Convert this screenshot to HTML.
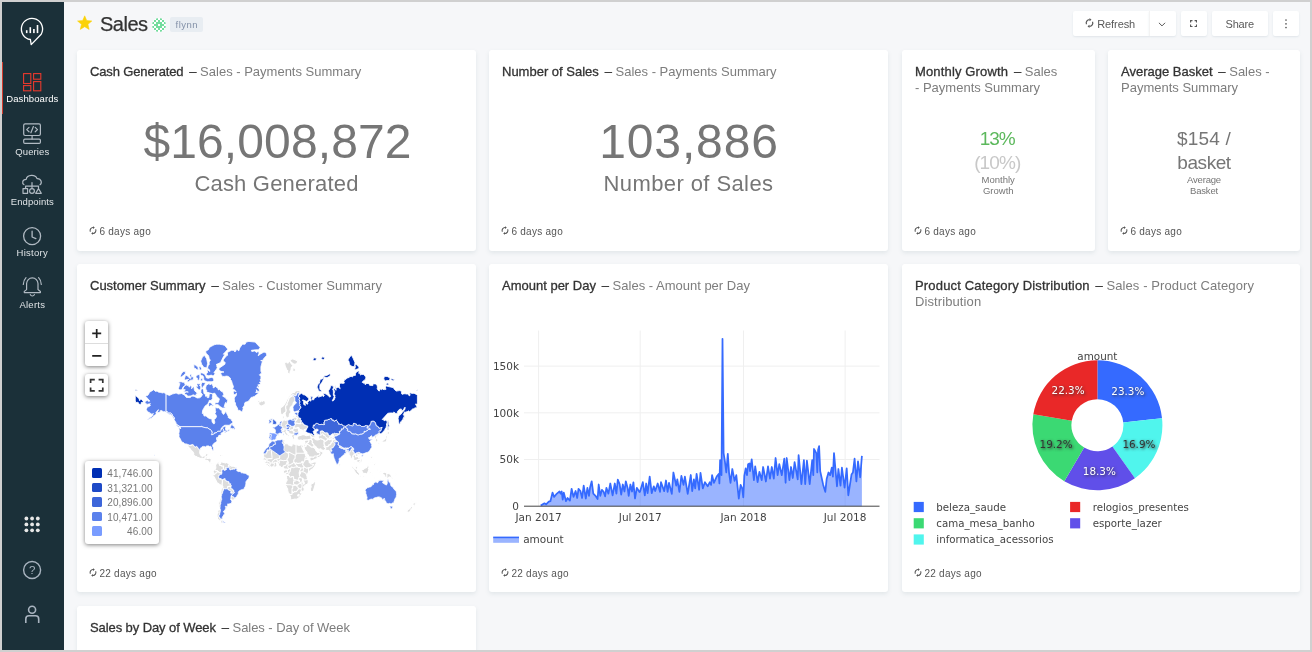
<!DOCTYPE html>
<html lang="en">
<head>
<meta charset="utf-8">
<title>Sales</title>
<style>
*{box-sizing:border-box;margin:0;padding:0}
html,body{width:1312px;height:652px;overflow:hidden}
body{background:#f6f7f9;font-family:"Liberation Sans",sans-serif;color:#333;position:relative}
#app{position:absolute;left:0;top:0;width:1312px;height:652px;overflow:hidden;will-change:transform}
#frame{position:absolute;left:0;top:0;width:1312px;height:652px;border:2px solid #d0d0d0;z-index:50;pointer-events:none}
#side{position:absolute;left:2px;top:2px;width:62px;height:648px;background:#1b3039}
#side .act{position:absolute;left:0;top:60px;width:1px;height:52px;background:#d33a2c}
#side .lbl{position:absolute;left:-.7px;letter-spacing:.1px;width:62px;text-align:center;font-size:9.5px;color:#dfe3e6;line-height:12px;white-space:nowrap}
#side svg{position:absolute;overflow:visible}
.card{position:absolute;background:#fff;border-radius:3px;box-shadow:0 2px 4px rgba(95,125,130,.13)}
.ttl{position:absolute;left:13px;top:14.3px;font-size:13px;line-height:16px;color:#333;white-space:nowrap}
.ttl b,.ttl i{font-weight:normal;-webkit-text-stroke:.3px #333}
.ttl span{color:#7d7d7d}
.ttl i{font-style:normal;margin-left:2.2px}
.foot{position:absolute;left:22.4px;font-size:10px;line-height:12px;color:#555;white-space:nowrap;letter-spacing:.27px}
.foot svg{position:absolute;left:-10.4px;top:.7px}
.btn{position:absolute;top:11px;height:25px;background:#fff;border-radius:2px;box-shadow:0 1px 2px rgba(102,136,153,.15);font-size:11px;color:#595959;line-height:25px;white-space:nowrap}
.lctl{position:absolute;background:#fff;border-radius:3px;box-shadow:0 1px 4px rgba(0,0,0,.5)}
.lctl i{position:absolute;left:7.4px;width:9.9px;height:9.8px;border-radius:1.5px}
.lctl span{position:absolute;right:6.4px;font-size:10px;line-height:13px;color:#777;white-space:nowrap;letter-spacing:.1px}
.big{position:absolute;left:0;width:100%;text-align:center;color:#767676;white-space:nowrap}
</style>
</head>
<body>
<div id="app">
<div id="side">
  <div class="act"></div>
  <svg width="62" height="648" viewBox="2 2 62 648" style="left:0;top:0" fill="none" stroke-linecap="round" stroke-linejoin="round">
    <!-- logo -->
    <g stroke="#fff" stroke-width="1.3">
      <path d="M30.4 39.5 A10.6 10.6 0 1 1 41.2 34.2 L31.2 44.6 Z"/>
    </g>
    <g fill="#fff" stroke="none">
      <rect x="25.9" y="30.2" width="1.6" height="2.9"/><rect x="29.5" y="27.2" width="1.6" height="5.9"/><rect x="33.1" y="29" width="1.6" height="4.1"/><rect x="36.7" y="25" width="1.6" height="8.1"/>
    </g>
    <!-- dashboards -->
    <g stroke="#e8392d" stroke-width="1.1" stroke-linejoin="miter">
      <rect x="23.6" y="73.6" width="7.2" height="9.9"/><rect x="33.6" y="73.6" width="7.2" height="5.6"/>
      <rect x="23.6" y="85.6" width="7.2" height="5.2"/><rect x="33.6" y="81.6" width="7.2" height="9.2"/>
    </g>
    <!-- queries -->
    <g stroke="#b1bac3" stroke-width="1.2">
      <rect x="23.7" y="123.9" width="16.7" height="11.6" rx="1.4"/>
      <path d="M32.1 135.6 V138.9"/>
      <rect x="23.7" y="139.1" width="16.7" height="4.3" rx="1.2"/>
      <path d="M29 127.4 L26.7 129.6 L29 131.8 M35.2 127.4 L37.5 129.6 L35.2 131.8 M33.4 126.5 L30.9 132.8"/>
    </g>
    <!-- endpoints -->
    <g stroke="#b1bac3" stroke-width="1.2">
      <path d="M23.9 184.6 C22 183.5 22 179.5 26.2 179.3 C27 174.3 35.5 174 37 178.6 C41.5 178.3 42.3 183.4 40 184.8"/>
      <path d="M32 182.6 V188 M25.6 188 V186.2 H38.5 V188"/>
      <rect x="23" y="188.7" width="4.6" height="4.6"/>
      <circle cx="32" cy="191" r="2.4"/>
      <path d="M38.5 188.6 L41.3 193.3 H35.7 Z"/>
    </g>
    <!-- history -->
    <g stroke="#b1bac3" stroke-width="1.3">
      <circle cx="32.1" cy="236.1" r="8.5"/>
      <path d="M32.1 231.2 V237 L35.9 238.6"/>
    </g>
    <!-- alerts -->
    <g stroke="#b1bac3" stroke-width="1.2">
      <path d="M26.6 289.6 V283.6 A5.7 5.7 0 0 1 38 283.6 V289.6 L40.4 291.4 V292.6 H24.3 V291.4 Z"/>
      <path d="M30.3 294.6 A2.2 2.2 0 0 0 34.4 294.6"/>
      <path d="M26 277.6 C24.3 279.3 23.4 281.6 23.3 284.4 M38.6 277.6 C40.3 279.3 41.2 281.6 41.3 284.4"/>
    </g>
    <!-- apps -->
    <g fill="#e8e8e8" stroke="none">
      <circle cx="26.4" cy="518.5" r="1.9"/><circle cx="32.1" cy="518.5" r="1.9"/><circle cx="37.8" cy="518.5" r="1.9"/>
      <circle cx="26.4" cy="524.4" r="1.9"/><circle cx="32.1" cy="524.4" r="1.9"/><circle cx="37.8" cy="524.4" r="1.9"/>
      <circle cx="26.4" cy="530.3" r="1.9"/><circle cx="32.1" cy="530.3" r="1.9"/><circle cx="37.8" cy="530.3" r="1.9"/>
    </g>
    <!-- help -->
    <g stroke="#a9b4c0" stroke-width="1.4">
      <circle cx="32.1" cy="570" r="8.5"/>
    </g>
    <text x="32.1" y="574.2" text-anchor="middle" font-family="Liberation Sans, sans-serif" font-size="11.5" fill="#a9b4c0" stroke="none">?</text>
    <!-- user -->
    <g stroke="#a9b4c0" stroke-width="1.6" stroke-linecap="butt">
      <circle cx="32.1" cy="609.7" r="3.5"/>
      <path d="M25.8 623 V619 A3.2 3.2 0 0 1 29 615.8 H35.5 A3.2 3.2 0 0 1 38.7 619 V623"/>
    </g>
  </svg>

  <div class="lbl" style="top:91px;color:#fff">Dashboards</div>
  <div class="lbl" style="top:144px">Queries</div>
  <div class="lbl" style="top:194px">Endpoints</div>
  <div class="lbl" style="top:245px;letter-spacing:.27px">History</div>
  <div class="lbl" style="top:297px;letter-spacing:.25px">Alerts</div>
</div>

<!-- header -->
<div id="hdr">
  <svg style="position:absolute;left:76.9px;top:14.9px" width="15.4" height="15.4" viewBox="0 0 17 17"><path d="M8.5 0.9 L10.75 6.1 L16.4 6.6 L12.1 10.35 L13.4 15.9 L8.5 12.95 L3.6 15.9 L4.9 10.35 L0.6 6.6 L6.25 6.1 Z" fill="#fbd208" stroke="#fbd208" stroke-width=".6" stroke-linejoin="round"/></svg>
  <div style="position:absolute;left:100px;top:11.5px;font-size:20px;line-height:24px;color:#333;letter-spacing:-.5px;-webkit-text-stroke:.25px #333">Sales</div>
  <svg style="position:absolute;left:152px;top:17.5px" width="14" height="14" viewBox="0 0 14 14">
    <defs><clipPath id="avc"><circle cx="7" cy="7" r="7"/></clipPath></defs>
    <g clip-path="url(#avc)"><rect width="14" height="14" fill="#fff"/>
    <g fill="#5bd68c" fill-opacity=".85"><rect x="4" y="0" width="2" height="2"/><rect x="8" y="0" width="2" height="2"/><rect x="2" y="2" width="2" height="2"/><rect x="6" y="2" width="2" height="2"/><rect x="10" y="2" width="2" height="2"/><rect x="0" y="4" width="2" height="2"/><rect x="4" y="4" width="2" height="2"/><rect x="6" y="4" width="2" height="2"/><rect x="8" y="4" width="2" height="2"/><rect x="12" y="4" width="2" height="2"/><rect x="2" y="6" width="2" height="2"/><rect x="4" y="6" width="2" height="2"/><rect x="8" y="6" width="2" height="2"/><rect x="10" y="6" width="2" height="2"/><rect x="0" y="8" width="2" height="2"/><rect x="4" y="8" width="2" height="2"/><rect x="6" y="8" width="2" height="2"/><rect x="8" y="8" width="2" height="2"/><rect x="12" y="8" width="2" height="2"/><rect x="2" y="10" width="2" height="2"/><rect x="6" y="10" width="2" height="2"/><rect x="10" y="10" width="2" height="2"/><rect x="4" y="12" width="2" height="2"/><rect x="8" y="12" width="2" height="2"/></g></g>
  </svg>
  <div style="position:absolute;left:170px;top:16.5px;width:33px;height:15px;background:#e8edf2;border-radius:2px;font-size:9.5px;line-height:15px;text-align:center;color:#8391a8;letter-spacing:.45px;text-indent:.45px">flynn</div>

  <div class="btn" style="left:1073px;width:76px;border-radius:2px 0 0 2px">
    <svg style="position:absolute;left:11.5px;top:7.2px" width="9" height="10" viewBox="0 0 9 10"><path d="M1.49 6.34 A3.3 3.3 0 0 1 4.60 1.70 M7.51 3.66 A3.3 3.3 0 0 1 4.40 8.30" fill="none" stroke="#595959" stroke-width="1.2"/><path d="M4.50 0.10 L6.50 1.70 L4.50 3.30 Z M4.50 6.70 L2.50 8.30 L4.50 9.90 Z" fill="#595959" stroke="none"/></svg>
    <span style="position:absolute;left:24.2px;top:.7px;letter-spacing:-.08px">Refresh</span></div>
  <div class="btn" style="left:1149px;width:27px;border-left:1px solid #f3f3f3;border-radius:0 2px 2px 0">
    <svg style="position:absolute;left:8.4px;top:10.8px" width="8" height="5" viewBox="0 0 8 5" fill="none" stroke="#595959" stroke-width="1"><path d="M0.9 0.8 L4 3.9 L7.1 0.8"/></svg></div>
  <div class="btn" style="left:1181px;width:26px">
    <svg style="position:absolute;left:9.2px;top:8.9px" width="7.1" height="7.1" viewBox="0 0 7.1 7.1" fill="none" stroke="#595959" stroke-width="1.15"><path d="M0.58 2.5 V0.58 H2.5 M4.6 0.58 H6.52 V2.5 M6.52 4.6 V6.52 H4.6 M2.5 6.52 H0.58 V4.6"/></svg></div>
  <div class="btn" style="left:1212px;width:55.5px;text-align:center;letter-spacing:-.2px;padding-top:.7px">Share</div>
  <div class="btn" style="left:1273px;width:26px">
    <svg style="position:absolute;left:12.2px;top:8px" width="2" height="10" viewBox="0 0 2 10" fill="#595959"><circle cx="1" cy="1" r=".85"/><circle cx="1" cy="4.8" r=".85"/><circle cx="1" cy="8.5" r=".85"/></svg></div>
</div>

<!-- row 1 -->
<div class="card" style="left:77px;top:50px;width:399px;height:201px">
  <div class="ttl"><b style="letter-spacing:-.14px">Cash Generated</b> <i>&ndash;</i> <span>Sales - Payments Summary</span></div>
  <div class="big" style="top:64.5px;font-size:48px;line-height:54px;letter-spacing:.1px;padding-left:2px">$16,008,872</div>
  <div class="big" style="top:120.9px;font-size:22px;line-height:26px;letter-spacing:.2px">Cash Generated</div>
  <div class="foot" style="top:175.7px">6 days ago<svg width="8" height="9" viewBox="0 0 8 9"><path d="M1.35 5.68 A2.9 2.9 0 0 1 4.10 1.60 M6.65 3.32 A2.9 2.9 0 0 1 3.90 7.40" fill="none" stroke="#555" stroke-width="1.05"/><path d="M4.00 0.20 L5.80 1.60 L4.00 3.00 Z M4.00 6.00 L2.20 7.40 L4.00 8.80 Z" fill="#555" stroke="none"/></svg></div>
</div>
<div class="card" style="left:489px;top:50px;width:399px;height:201px">
  <div class="ttl"><b>Number of Sales</b> <i>&ndash;</i> <span>Sales - Payments Summary</span></div>
  <div class="big" style="top:64.5px;font-size:48px;line-height:54px;letter-spacing:.88px;padding-left:1px">103,886</div>
  <div class="big" style="top:120.9px;font-size:22px;line-height:26px;letter-spacing:.4px">Number of Sales</div>
  <div class="foot" style="top:175.7px">6 days ago<svg width="8" height="9" viewBox="0 0 8 9"><path d="M1.35 5.68 A2.9 2.9 0 0 1 4.10 1.60 M6.65 3.32 A2.9 2.9 0 0 1 3.90 7.40" fill="none" stroke="#555" stroke-width="1.05"/><path d="M4.00 0.20 L5.80 1.60 L4.00 3.00 Z M4.00 6.00 L2.20 7.40 L4.00 8.80 Z" fill="#555" stroke="none"/></svg></div>
</div>
<div class="card" style="left:902px;top:50px;width:192.5px;height:201px">
  <div class="ttl"><b style="letter-spacing:.15px">Monthly Growth</b> <i>&ndash;</i> <span>Sales<br>- Payments Summary</span></div>
  <div class="big" style="top:77.1px;font-size:19px;line-height:24px;color:#5cb85c;letter-spacing:-1.1px;padding-right:2.2px">13%</div>
  <div class="big" style="top:101.2px;font-size:19px;line-height:24px;color:#c8c8c8;letter-spacing:-.9px;padding-right:2px">(10%)</div>
  <div class="big" style="top:123.9px;font-size:9.5px;line-height:11.4px;white-space:normal">Monthly<br>Growth</div>
  <div class="foot" style="top:175.7px">6 days ago<svg width="8" height="9" viewBox="0 0 8 9"><path d="M1.35 5.68 A2.9 2.9 0 0 1 4.10 1.60 M6.65 3.32 A2.9 2.9 0 0 1 3.90 7.40" fill="none" stroke="#555" stroke-width="1.05"/><path d="M4.00 0.20 L5.80 1.60 L4.00 3.00 Z M4.00 6.00 L2.20 7.40 L4.00 8.80 Z" fill="#555" stroke="none"/></svg></div>
</div>
<div class="card" style="left:1108px;top:50px;width:192px;height:201px">
  <div class="ttl"><b>Average Basket</b> <i>&ndash;</i> <span>Sales -<br>Payments Summary</span></div>
  <div class="big" style="top:77.1px;font-size:19px;line-height:24px;letter-spacing:.2px">$154 /</div>
  <div class="big" style="top:101.2px;font-size:19px;line-height:24px;letter-spacing:-.45px">basket</div>
  <div class="big" style="top:123.9px;font-size:9.5px;line-height:11.4px;white-space:normal;letter-spacing:-.2px">Average<br>Basket</div>
  <div class="foot" style="top:175.7px">6 days ago<svg width="8" height="9" viewBox="0 0 8 9"><path d="M1.35 5.68 A2.9 2.9 0 0 1 4.10 1.60 M6.65 3.32 A2.9 2.9 0 0 1 3.90 7.40" fill="none" stroke="#555" stroke-width="1.05"/><path d="M4.00 0.20 L5.80 1.60 L4.00 3.00 Z M4.00 6.00 L2.20 7.40 L4.00 8.80 Z" fill="#555" stroke="none"/></svg></div>
</div>

<!-- row 2 -->
<div class="card" style="left:77px;top:264px;width:399px;height:328px">
  <svg style="position:absolute;left:0;top:0" width="399" height="328" viewBox="77 264 399 328">
<g stroke="#fff" stroke-width=".8" stroke-linejoin="round">
<path d="M204.1 459.4 204.1 458.8 204.5 458.1 205.5 458.1 205.6 457.9 205.1 457.1 205.1 456.7 206.6 456.7 206.6 456.6 207.0 456.1 207.4 456.5 207.2 457.4 206.7 458.3 207.3 458.4 207.9 458.4 209.0 458.3 209.8 458.3 210.3 458.4 211.0 458.8 211.3 459.0 211.0 460.1 211.0 461.1 210.8 461.7 210.6 462.5 211.0 462.7 211.7 463.3 212.0 463.7 212.6 464.0 213.4 463.7 214.0 463.3 214.9 463.5 215.7 464.1 215.7 464.2 215.9 464.7 215.3 465.2 215.0 464.5 214.8 464.1 214.0 463.9 213.5 464.4 213.3 464.5 213.7 465.0 213.0 465.2 212.4 464.5 211.4 464.5 211.4 464.5 211.0 464.3 210.8 464.1 210.1 463.3 209.7 463.3 209.2 463.1 209.2 462.3 209.2 462.1 208.6 461.6 208.1 461.0 207.7 460.7 207.8 460.4 207.5 460.5 207.0 460.5 206.4 460.2 205.8 460.1 204.9 459.9Z" fill="#dddddd" stroke-width="1.05"/>
<path d="M211.9 452.2 213.2 452.3 214.2 452.9 215.0 452.8 216.4 453.9 217.1 454.1 217.7 454.3 218.2 454.7 217.6 455.0 215.4 455.0 216.0 454.6 215.2 454.3 214.7 453.6 213.5 453.4 212.3 453.1 212.0 452.9 212.3 452.7 211.0 453.1 210.6 453.3 210.2 453.4 209.8 453.3 210.3 453.1 210.4 452.7 211.1 452.4ZM219.0 455.0 220.3 455.0 220.9 455.0 221.6 455.2 221.7 455.5 222.9 456.1 222.6 456.4 221.1 456.4 220.4 456.9 220.2 456.6 219.7 456.4 218.5 456.6 218.0 456.3 219.4 456.2 219.7 456.0 219.3 455.7 219.3 455.3 218.9 455.2ZM215.6 456.1 216.1 456.2 216.7 456.6 215.9 456.8 215.0 456.4ZM224.4 456.1 225.0 456.4 224.7 456.6 223.7 456.6 223.7 456.2Z" fill="#dddddd" stroke-width="1.05"/>
<path d="M184.6 443.9 186.4 443.9 189.4 445.1 191.6 445.1 191.6 444.6 192.9 444.6 194.1 445.7 194.5 446.6 195.6 447.1 196.1 446.4 196.7 446.4 197.3 446.8 198.0 447.9 198.4 448.5 198.8 449.4 200.0 450.0 200.3 449.9 199.8 451.3 199.7 452.9 200.2 454.4 200.8 455.0 200.9 455.5 201.2 455.9 202.1 456.1 202.4 456.5 203.7 456.1 204.8 455.8 205.2 455.5 205.5 454.3 205.6 454.1 207.0 453.6 208.1 453.6 208.4 453.8 207.9 454.7 207.7 455.2 207.6 456.3 207.0 456.1 206.6 456.6 206.6 456.7 205.1 456.7 205.1 457.1 205.6 457.9 205.5 458.1 204.5 458.1 204.1 458.8 204.1 459.4 203.2 458.5 202.2 458.0 200.7 458.4 198.9 457.7 197.4 457.2 196.5 456.6 195.3 456.3 194.1 455.5 193.7 455.0 193.6 454.6 193.9 454.0 193.6 453.3 193.3 452.5 192.6 451.7 191.4 450.5 190.7 450.1 190.7 449.2 189.9 448.7 189.7 448.1 188.8 447.6 188.5 447.1 188.0 446.2 187.8 445.1 186.4 444.6 186.4 445.0 186.5 446.1 187.6 447.3 188.0 448.2 188.4 449.8 189.2 451.1 190.0 451.3 190.7 452.0 190.2 452.5 190.0 452.0 188.9 451.1 188.5 450.9 188.5 450.2 187.5 449.1 186.7 448.8 186.2 448.3 186.9 447.9 186.9 447.5 185.9 446.6 184.9 444.8Z" fill="#dddddd" stroke-width="1.05"/>
<path d="M221.9 479.5 222.9 479.6 223.1 479.3 224.2 478.7 225.1 478.6 225.2 479.5 225.1 480.1 226.0 480.8 226.9 480.9 227.2 481.2 228.0 481.6 228.5 481.6 229.0 481.8 229.1 482.9 229.0 482.9 229.2 483.8 230.8 483.8 230.6 484.3 230.7 484.7 231.3 485.4 231.2 486.1 231.0 486.9 230.8 487.1 230.8 486.8 230.1 486.4 229.4 486.3 228.0 486.6 227.6 487.3 227.6 487.8 227.3 488.7 227.2 488.6 226.2 488.6 225.9 489.3 225.5 488.7 224.4 488.4 223.8 489.2 223.2 489.3 222.9 488.1 222.5 487.2 222.8 486.4 222.3 486.1 222.2 485.5 221.9 484.9 222.3 484.0 222.0 483.4 222.2 483.0 222.1 482.8 222.4 482.4 222.4 481.7 222.4 481.1 222.6 480.9Z" fill="#dddddd" stroke-width="1.05"/>
<path d="M222.6 519.5 222.6 522.5 223.4 522.5 223.9 522.6 223.7 523.1 223.0 523.5 222.6 523.5 222.1 523.4 221.6 523.0 220.8 522.8 219.8 522.0 219.0 521.3 217.9 519.8 218.5 520.1 219.6 521.0 220.7 521.5 221.1 520.9 221.3 520.0 222.0 519.4ZM221.9 484.9 222.2 485.5 222.3 486.1 222.8 486.4 222.5 487.2 222.9 488.1 223.2 489.3 223.8 489.2 223.9 489.4 223.7 490.3 222.8 490.7 222.8 492.2 222.6 492.4 222.9 492.8 222.3 493.3 221.8 494.2 221.5 495.0 221.6 495.8 221.1 496.8 221.5 498.4 221.7 498.6 221.7 499.4 221.2 500.4 221.2 501.2 220.7 501.9 220.7 502.7 220.9 503.7 220.4 504.0 220.2 504.9 220.0 506.0 220.2 507.3 219.9 507.5 220.0 508.7 220.4 509.1 220.1 509.6 220.5 509.8 220.6 510.2 220.2 510.4 220.3 511.1 220.0 512.6 219.7 513.5 219.7 514.1 219.5 514.9 218.9 515.4 218.9 516.8 219.2 517.1 219.7 517.1 219.7 518.0 220.0 518.8 221.9 518.9 222.6 519.1 222.0 519.1 221.6 519.5 220.9 519.9 220.7 521.1 220.4 521.2 219.5 520.7 218.6 519.8 217.7 519.1 217.4 518.3 217.6 517.6 217.2 516.7 217.1 514.7 217.5 513.5 218.3 512.7 217.1 512.3 217.9 511.3 218.1 509.5 219.0 509.9 219.4 507.6 218.9 507.4 218.6 508.7 218.1 508.5 218.4 507.0 218.7 505.1 219.0 504.4 218.8 503.4 218.7 502.3 219.1 502.3 219.5 500.7 220.1 499.2 220.4 497.8 220.2 496.4 220.5 495.6 220.4 494.5 220.8 493.4 221.0 491.8 221.2 490.0 221.5 488.1 221.4 486.7 221.2 485.5Z" fill="#dddddd" stroke-width="1.05"/>
<path d="M215.7 464.1 216.2 464.1 217.1 463.5 217.2 462.5 217.7 462.1 218.2 462.1 218.9 462.1 219.8 461.5 220.2 461.1 220.4 461.1 220.7 461.3 220.5 461.6 220.0 461.7 219.6 462.2 218.9 463.7 219.3 463.7 219.7 464.3 219.7 465.1 220.0 465.4 221.5 465.4 222.0 466.1 223.3 466.0 223.7 466.1 223.3 467.4 223.7 468.2 223.3 468.7 223.6 468.9 224.0 469.9 223.8 470.0 223.7 469.6 223.5 469.3 223.2 469.6 221.7 469.6 221.7 470.0 222.2 470.1 222.1 470.4 221.9 470.4 221.5 470.5 221.5 471.1 221.8 471.3 222.0 471.8 222.0 472.2 221.6 474.3 221.2 473.9 221.0 473.8 221.5 473.0 220.9 472.7 220.4 472.7 219.7 472.8 219.1 472.7 218.6 471.9 218.3 471.7 217.3 471.1 217.5 470.9 217.0 470.8 216.6 470.6 215.7 470.6 215.5 470.3 214.6 469.8 214.5 469.6 214.8 469.5 214.7 469.1 215.0 468.9 215.3 468.8 216.0 467.9 215.7 467.7 215.8 467.2 215.7 466.5 215.8 466.3 215.7 465.6 215.3 465.2 215.9 464.7 215.7 464.2Z" fill="#dddddd" stroke-width="1.05"/>
<path d="M213.5 473.6 213.9 473.0 213.7 472.6 213.4 473.0 212.9 472.6 213.1 472.5 213.0 471.8 213.2 471.6 213.4 471.1 213.7 470.6 213.6 470.3 214.6 469.8 215.5 470.3 215.7 470.6 216.6 470.6 217.0 470.8 217.5 470.9 217.3 471.1 217.5 471.6 217.2 472.2 216.4 472.9 215.4 473.3 214.9 474.0 214.8 474.4 214.3 474.8 214.0 474.4 213.7 474.3 213.4 474.4 213.3 474.1 213.5 473.9Z" fill="#dddddd" stroke-width="1.05"/>
<path d="M228.4 518.6 229.4 517.8 230.0 518.1 230.5 517.6 231.1 518.2 230.9 518.6 229.8 519.0 229.5 518.6 228.8 519.1Z" fill="#dddddd" stroke-width="1.05"/>
<path d="M229.5 464.3 230.1 464.6 230.5 465.2 230.5 465.6 230.9 465.6 231.3 466.0 231.6 466.2 232.5 466.3 233.3 466.2 234.1 466.3 234.9 466.7 235.8 467.3 235.9 467.6 235.5 468.4 235.2 468.9 234.9 469.3 234.4 469.1 234.2 469.0 234.0 469.3 233.7 469.1 233.2 468.9 232.8 469.0 232.5 468.9 232.4 469.2 232.6 469.3 232.5 469.5 232.1 469.4 231.5 469.4 231.2 469.6 230.6 469.7 230.5 469.9 230.2 469.9 229.7 469.5 229.6 469.2 229.4 468.7 229.5 468.1 229.8 467.8 229.5 467.4 229.3 467.3 229.4 467.0 229.2 466.8 228.8 466.8 228.3 466.2 228.5 466.0 228.4 465.6 229.0 465.5 229.1 465.4 228.9 465.1 228.9 464.8Z" fill="#dddddd" stroke-width="1.05"/>
<path d="M227.3 488.7 227.6 487.8 227.6 487.3 228.0 486.6 229.4 486.3 230.1 486.4 230.8 486.8 230.8 487.1 231.0 487.5 231.0 488.7 232.1 488.7 232.8 489.2 233.0 490.3 233.8 490.3 233.8 490.8 233.6 491.7 233.6 491.7 233.4 492.5 232.7 493.2 232.1 493.3 231.3 493.2 230.5 493.0 231.3 491.7 231.1 491.3 230.3 491.0 229.4 490.3 228.7 490.2Z" fill="#dddddd" stroke-width="1.05"/>
<path d="M221.9 484.9 221.2 485.5 220.4 485.1 220.4 484.7 218.9 483.9 217.5 483.0 216.8 482.5 216.5 481.8 216.6 481.6 216.0 480.5 215.2 479.1 214.5 477.5 214.2 477.1 213.9 476.6 213.3 476.0 212.8 475.7 213.0 475.4 212.6 474.6 212.8 474.0 213.5 473.6 213.5 473.9 213.3 474.1 213.4 474.4 213.7 474.3 214.0 474.4 214.3 474.8 214.8 474.4 214.9 474.0 215.4 473.3 216.4 472.9 217.2 472.2 217.5 471.6 217.3 471.1 218.3 471.7 218.6 471.9 219.1 472.7 219.7 472.8 220.4 472.7 220.9 472.7 221.5 473.0 221.0 473.8 221.2 473.9 221.6 474.3 220.9 474.3 220.8 474.4 220.2 474.5 219.3 475.1 219.2 475.4 219.0 475.7 219.1 476.1 218.6 476.3 218.6 476.6 218.4 476.8 218.7 477.5 219.2 478.0 219.0 478.4 219.5 478.4 219.8 478.9 221.1 478.4 221.1 479.6 221.9 479.5 222.6 480.9 222.4 481.1 222.4 481.7 222.4 482.4 222.1 482.8 222.2 483.0 222.0 483.4 222.3 484.0 221.8 484.9Z" fill="#dddddd" stroke-width="1.05"/>
<path d="M231.3 495.7 231.7 495.6 232.5 496.4 232.8 496.4 233.6 496.9 234.2 497.4 234.7 498.0 234.4 498.5 234.5 499.1 234.2 499.6 233.4 500.2 232.7 500.0 232.3 500.1 231.6 499.6 231.1 499.7 230.6 499.2 230.7 498.6 230.9 498.3 230.9 497.4 231.0 496.5Z" fill="#dddddd" stroke-width="1.05"/>
<path d="M220.5 461.6 220.4 461.8 220.0 461.9 220.3 462.3 220.3 462.7 219.9 463.1 220.2 463.7 220.5 463.7 220.8 463.1 220.4 462.9 220.4 462.2 221.4 461.9 221.3 461.6 221.6 461.3 221.8 461.8 222.4 461.9 222.9 462.3 222.9 462.5 223.7 462.6 224.5 462.5 224.9 462.9 225.5 462.9 226.0 462.7 226.0 462.5 227.9 462.5 227.3 462.7 227.5 463.1 228.1 463.1 228.7 463.5 228.8 464.1 229.2 464.1 229.5 464.3 228.9 464.8 228.9 465.1 229.1 465.4 229.0 465.5 228.4 465.6 228.5 466.0 228.3 466.2 228.8 466.8 228.9 467.1 228.6 467.4 227.7 467.6 227.2 467.8 226.9 467.9 226.3 467.8 225.8 467.7 225.6 467.7 225.9 467.9 225.9 468.5 226.0 468.9 226.7 469.0 226.7 469.2 226.2 469.4 226.1 469.7 225.8 469.9 225.1 470.0 225.1 470.3 224.4 470.4 224.0 469.9 223.6 468.9 223.3 468.7 223.7 468.2 223.3 467.4 223.7 466.1 223.3 466.0 222.0 466.1 221.5 465.4 220.0 465.4 219.7 465.1 219.7 464.3 219.3 463.7 218.9 463.7 219.6 462.2 220.0 461.7Z" fill="#dddddd" stroke-width="1.05"/>
<path d="M294.8 420.6 295.6 420.6 296.4 420.0 296.6 419.4 297.2 418.8 297.1 418.3 297.6 418.0 298.5 417.4 299.3 417.8 299.4 418.1 299.8 418.0 300.6 418.3 300.7 418.9 300.5 419.4 301.0 420.2 301.3 420.5 301.2 420.7 301.8 421.0 302.0 421.2 301.7 421.6 301.1 421.5 300.9 421.6 301.1 422.1 301.3 422.9 300.6 423.0 300.4 423.3 300.4 423.9 300.0 423.8 299.3 423.8 299.1 423.5 298.8 423.8 298.5 423.5 297.9 423.5 297.0 423.3 296.2 423.2 295.7 423.2 295.2 423.5 294.8 423.5 294.8 423.0 294.6 422.4 295.0 422.1 295.0 421.6 294.8 421.1Z" fill="#dddddd" stroke-width="1.05"/>
<path d="M286.3 418.3 285.9 419.4 285.0 418.5 284.9 418.0 286.1 417.6ZM284.9 417.0 284.8 417.6 284.5 416.9 283.9 418.4 284.1 419.1 283.7 419.4 283.0 419.1 282.7 418.4 282.7 417.0 282.9 416.6 283.0 416.1 283.7 416.0 284.1 415.7 284.7 415.3 284.6 416.0 284.5 416.4Z" fill="#dddddd" stroke-width="1.05"/>
<path d="M284.1 419.1 284.2 419.6 285.0 420.0 285.0 420.4 285.8 420.2 286.2 419.8 287.0 420.3 287.4 420.7 287.7 421.5 287.4 421.8 287.7 422.3 287.9 422.9 287.8 423.4 288.1 424.2 287.8 424.3 287.6 424.2 287.4 424.4 286.8 424.7 286.5 424.9 285.9 425.2 286.1 425.6 286.2 426.1 286.6 426.4 287.0 426.9 286.7 427.4 286.5 427.6 286.6 428.4 286.3 428.3 285.9 428.3 285.3 428.5 284.6 428.4 284.5 428.7 284.1 428.4 283.9 428.5 283.0 428.2 282.9 428.4 282.3 428.4 282.3 427.6 282.7 426.7 281.6 426.5 281.2 426.1 281.2 425.7 281.1 425.4 281.2 424.5 281.1 423.2 281.6 423.2 281.7 422.8 281.9 421.6 281.8 421.1 281.9 420.8 282.6 420.8 282.7 421.1 283.3 420.4 283.1 419.9 283.0 419.1 283.7 419.4Z" fill="#dddddd" stroke-width="1.05"/>
<path d="M291.6 434.7 292.1 433.9 292.4 434.4 292.5 434.7 293.3 434.4 293.9 434.3 294.3 434.6 294.4 435.3 294.9 435.3 295.6 435.0 296.1 435.4 296.8 435.3 296.8 434.8 297.2 435.0 297.0 435.7 296.8 435.8 296.3 435.7 295.9 435.7 294.9 435.9 295.5 436.5 295.1 436.7 294.6 436.7 294.2 436.1 294.1 436.3 294.2 437.0 294.7 437.5 294.4 437.7 294.8 438.2 295.2 438.5 295.2 439.0 294.5 438.8 294.7 439.3 294.2 439.4 294.6 440.2 294.0 440.2 293.4 439.9 293.1 439.1 292.9 438.4 292.6 437.9 292.2 437.4 292.2 437.1 292.0 437.0 292.0 436.8 291.6 436.3 291.5 435.9 291.7 434.9ZM294.9 440.9 295.3 441.2 296.0 441.2 296.6 441.2 297.0 441.3 296.9 441.6 295.7 441.7 294.8 441.3Z" fill="#dddddd" stroke-width="1.05"/>
<path d="M289.1 429.2 289.3 428.5 289.2 428.3 289.6 428.3 289.7 427.8 289.7 427.2 289.8 427.0 290.1 427.0 290.4 426.7 290.6 426.7 290.6 426.4 291.0 426.1 291.2 426.3 291.5 426.0 291.9 426.5 292.4 426.3 292.8 426.4 293.3 426.1 294.1 426.6 293.9 427.0 293.7 427.4 294.1 427.7 294.2 428.0 293.7 428.3 293.3 429.1 292.8 429.9 292.2 430.1 291.7 430.0 291.1 430.3 290.9 430.4 290.2 430.3 289.3 429.6Z" fill="#dddddd" stroke-width="1.05"/>
<path d="M265.0 400.4 264.9 401.8 265.7 403.1 264.7 404.4 262.4 405.6 261.7 406.0 260.7 405.8 258.5 405.2 259.3 404.4 257.6 403.5 259.0 403.1 259.0 402.5 257.3 402.1 257.8 400.8 259.1 400.6 260.2 402.0 261.4 400.8 262.4 401.4 263.7 400.4Z" fill="#dddddd" stroke-width="1.05"/>
<path d="M286.1 429.3 287.2 429.6 287.1 430.2 287.3 430.7 286.6 430.6 286.0 430.9 286.1 431.4 286.0 431.8 286.3 432.3 287.0 432.9 287.3 433.7 288.2 434.6 288.8 434.6 289.1 434.9 288.8 435.1 290.1 435.7 290.8 436.2 290.9 436.4 290.7 436.9 290.2 436.3 289.6 436.2 289.2 436.9 289.9 437.3 289.8 437.8 289.4 437.9 289.0 438.7 288.7 438.8 288.7 438.5 288.8 437.9 289.0 437.7 288.7 437.2 288.4 436.7 288.1 436.4 287.9 436.0 287.4 435.8 287.0 435.4 286.5 435.3 285.9 434.9 285.2 434.2 284.6 433.6 284.4 432.5 284.0 432.4 283.4 432.0 283.0 432.2 282.6 432.7 282.2 432.8 282.3 432.3 281.9 432.1 281.6 431.3 281.9 431.0 281.7 430.6 281.7 430.2 282.1 430.4 282.5 430.4 282.9 430.0 283.0 430.2 283.4 430.2 283.6 429.8 284.1 429.9 284.5 429.6 284.5 429.2 285.0 429.3 285.2 429.2 285.9 429.0ZM288.5 438.5 288.3 439.3 288.4 439.6 288.2 440.0 287.6 439.7 287.2 439.6 286.1 439.1 286.3 438.6 287.1 438.7 288.0 438.6ZM283.6 435.4 284.1 436.1 284.0 437.5 283.6 437.5 283.3 437.8 283.0 437.5 283.0 436.2 282.8 435.6 283.2 435.7Z" fill="#dddddd" stroke-width="1.05"/>
<path d="M292.9 416.6 293.3 415.7 294.0 415.1 294.6 416.3 295.3 416.3 295.4 415.1 296.1 414.9 296.4 415.1 297.1 415.6 297.8 415.6 298.2 416.0 298.2 416.6 298.5 417.4 297.6 418.0 297.1 418.3 296.4 417.6 295.9 417.1 295.1 417.3 293.8 417.3 292.9 417.7Z" fill="#dddddd" stroke-width="1.05"/>
<path d="M294.2 420.0 294.2 419.2 293.9 419.1 293.1 418.8 292.9 417.7 293.8 417.3 295.1 417.3 295.9 417.1 296.4 417.6 297.1 418.3 297.2 418.8 296.6 419.4 296.4 420.0 295.6 420.6 294.8 420.6 294.6 420.2Z" fill="#dddddd" stroke-width="1.05"/>
<path d="M297.2 427.7 297.5 427.4 297.9 427.3 298.6 427.7 298.9 427.8 299.2 428.2 299.1 428.5 299.4 428.7 299.6 429.2 299.8 429.4 299.7 429.6 299.9 429.8 299.7 429.9 299.3 429.8 299.2 429.6 299.0 429.9 298.9 430.3 298.7 430.7 298.5 430.8 298.4 429.3 298.0 428.6 297.7 428.2 297.5 427.8Z" fill="#dddddd" stroke-width="1.05"/>
<path d="M300.7 393.9 299.4 394.8 298.8 395.0 299.1 393.5 298.1 392.5 296.9 393.5 296.5 395.0 295.7 396.1 294.8 395.5 293.9 395.7 293.0 394.4 292.5 395.0 292.0 395.0 292.0 396.5 290.5 396.1 290.2 397.4 289.5 397.4 288.2 401.0 287.0 403.6 287.3 404.4 287.0 405.1 286.3 404.9 285.7 406.7 285.8 408.9 286.3 409.7 286.0 411.6 285.4 412.7 285.0 413.5 284.5 412.6 283.0 414.4 281.9 414.7 280.8 413.9 280.5 412.2 280.3 408.5 281.0 407.5 283.1 406.0 284.6 404.2 286.1 401.6 288.0 397.8 289.2 396.1 291.4 393.5 293.1 392.3 294.4 392.5 295.6 390.6 297.1 390.7 298.5 390.2 300.9 391.8 299.9 392.5ZM288.2 362.9 288.5 361.5 289.7 361.1 290.7 362.9 293.2 366.0 291.3 367.5 290.9 370.5 290.2 371.3 289.8 374.1 288.8 374.1 287.2 372.0 287.9 370.9 286.7 369.8 285.2 366.2 284.5 362.9 286.7 361.5 287.1 362.9ZM290.5 359.7 292.4 358.7 295.2 359.7 297.8 361.1 296.7 363.7 294.4 364.2 292.1 363.3 292.0 362.4 290.9 362.0 290.0 360.2ZM292.6 368.6 294.3 367.8 295.7 370.1 294.0 372.0 292.6 370.9 293.1 370.1Z" fill="#dddddd" stroke-width="1.05"/>
<path d="M294.2 428.0 294.5 427.8 295.0 427.9 295.5 427.9 295.9 428.3 296.1 428.0 296.7 427.9 296.9 427.7 297.2 427.7 297.5 427.8 297.7 428.2 298.0 428.6 298.4 429.3 298.5 430.8 298.9 431.0 299.2 430.8 299.6 431.0 299.6 431.3 299.2 431.6 298.9 431.4 298.8 432.8 298.3 432.7 297.7 432.2 296.8 432.5 296.4 432.8 295.3 432.8 294.6 432.5 294.3 432.7 294.2 432.2 294.0 432.0 294.2 431.8 293.7 431.9 293.3 431.6 293.2 431.1 292.7 430.6 292.2 430.1 292.8 429.9 293.3 429.1 293.7 428.3Z" fill="#dddddd" stroke-width="1.05"/>
<path d="" fill="#dddddd" stroke-width="1.05"/>
<path d="M287.2 429.6 287.8 429.8 288.2 429.4 288.9 429.4 289.1 429.2 289.3 429.6 290.2 430.3 290.9 430.4 291.1 430.3 291.7 430.0 292.2 430.1 292.7 430.6 293.2 431.1 293.3 431.6 293.7 431.9 294.2 431.8 293.9 432.4 293.9 432.9 294.4 433.3 294.1 433.6 293.9 434.3 293.3 434.4 292.5 434.7 292.4 434.4 292.1 433.9 291.6 434.7 291.2 434.3 290.9 434.0 290.1 433.6 289.6 433.3 288.9 433.0 288.3 432.2 288.4 432.1 288.1 431.7 288.1 431.2 287.6 431.1 287.3 431.6 287.1 431.2 287.1 430.8 287.3 430.7 287.1 430.2Z" fill="#dddddd" stroke-width="1.05"/>
<path d="M293.8 402.0 293.0 403.3 293.1 404.4 291.9 405.8 290.3 407.4 289.8 409.7 290.3 410.8 291.1 411.6 290.4 413.4 289.5 413.8 289.2 416.3 288.8 417.6 287.9 417.4 287.4 418.5 286.5 418.5 286.3 417.3 285.6 415.7 285.0 413.5 285.4 412.7 286.0 411.6 286.3 409.7 285.8 408.9 285.7 406.7 286.3 404.9 287.0 405.1 287.3 404.4 287.0 403.6 288.2 401.0 289.5 397.4 290.2 397.4 290.5 396.1 292.0 396.5 292.0 395.0 292.5 395.0 293.6 396.1 294.8 397.6 294.9 400.6 295.1 401.4Z" fill="#dddddd" stroke-width="1.05"/>
<path d="M283.9 428.5 283.9 428.7 283.8 429.0 284.5 429.2 284.5 429.6 284.1 429.9 283.6 429.8 283.4 430.2 283.0 430.2 282.9 430.0 282.5 430.4 282.1 430.4 281.7 430.2 281.5 429.8 281.1 429.9 281.1 429.4 281.7 428.7 281.6 428.5 282.0 428.6 282.3 428.4 282.9 428.4 283.0 428.2Z" fill="#dddddd" stroke-width="1.05"/>
<path d="M301.3 422.9 301.6 422.9 301.8 422.7 302.0 422.8 302.9 422.7 303.3 423.3 303.1 423.5 303.2 423.9 303.8 424.0 304.1 424.5 304.1 424.8 305.1 425.3 305.7 425.0 306.2 425.7 306.6 425.7 307.8 426.0 307.8 426.4 307.5 427.0 307.6 427.7 307.5 428.0 306.4 428.5 306.3 429.0 305.7 429.1 305.2 429.4 304.4 429.5 303.8 429.9 303.8 430.6 304.2 430.9 305.0 430.8 304.8 431.2 304.0 431.4 302.9 432.0 302.5 431.8 302.6 431.3 301.8 431.0 301.9 430.8 302.7 430.3 302.5 430.1 301.2 429.9 301.2 429.4 300.4 429.5 300.2 430.2 299.6 431.0 299.2 430.8 298.9 431.0 298.5 430.8 298.7 430.7 298.9 430.3 299.0 429.9 299.2 429.6 299.3 429.8 299.7 429.9 299.9 429.8 299.7 429.6 299.8 429.4 299.6 429.2 299.4 428.7 299.1 428.5 299.2 428.2 298.9 427.8 298.6 427.7 297.9 427.3 297.5 427.4 297.2 427.7 296.9 427.7 296.7 427.9 296.1 428.0 295.9 428.3 295.5 427.9 295.0 427.9 294.5 427.8 294.2 428.0 294.1 427.7 293.7 427.4 293.9 427.0 294.1 426.6 294.2 426.7 294.0 426.1 294.7 425.2 295.1 425.0 295.2 424.7 294.8 423.5 295.2 423.5 295.7 423.2 296.2 423.2 297.0 423.3 297.9 423.5 298.5 423.5 298.8 423.8 299.1 423.5 299.3 423.8 300.0 423.8 300.4 423.9 300.4 423.3 300.6 423.0Z" fill="#dddddd" stroke-width="1.05"/>
<path d="M271.8 440.8 272.3 440.9 272.8 441.3 273.6 441.2 274.3 441.4 274.7 441.5 276.4 440.8 277.6 440.0 278.7 439.9 280.5 439.9 282.1 439.6 283.0 439.8 283.8 439.4 284.4 439.5 285.1 439.8 284.7 440.7 284.8 441.8 284.3 442.3 284.5 442.7 285.1 443.2 285.4 443.4 286.3 443.7 288.3 444.1 288.7 445.0 290.5 445.5 291.3 446.0 292.1 445.3 291.9 444.6 292.1 444.2 293.2 443.7 294.6 444.2 296.1 444.8 297.1 444.8 299.0 445.4 300.7 444.8 301.5 445.1 302.2 445.3 303.3 445.1 303.7 446.7 303.3 447.8 303.2 448.2 302.9 448.4 302.7 448.0 302.3 447.7 301.8 446.3 301.7 446.4 302.0 447.4 302.5 448.3 303.1 449.7 303.6 450.7 304.4 451.6 304.2 452.3 305.1 453.1 305.3 453.2 305.5 454.1 305.3 454.2 305.4 455.1 305.8 456.1 306.5 456.6 306.9 457.5 307.2 458.3 307.6 458.7 308.7 459.4 309.8 460.6 310.1 460.9 310.3 461.1 310.3 461.5 309.8 461.7 310.1 461.8 310.5 462.0 310.9 462.7 311.3 462.7 312.1 462.5 312.9 462.4 313.6 462.1 314.7 461.9 315.8 461.7 316.1 461.4 316.4 461.4 316.4 462.1 316.3 462.5 316.2 462.8 316.0 463.7 315.6 464.5 315.2 465.6 314.5 466.7 313.8 467.6 312.9 468.6 312.1 469.3 310.9 470.0 310.1 470.7 309.3 471.6 309.0 472.2 308.4 472.5 308.0 472.9 307.8 473.5 307.6 473.8 307.4 474.3 307.1 474.6 306.7 475.5 306.8 476.0 307.2 476.2 307.3 476.5 307.1 477.0 307.2 477.2 307.1 477.6 307.3 478.1 307.6 478.9 308.0 479.0 308.1 479.4 308.0 480.2 308.2 480.9 308.2 482.1 308.3 482.5 308.1 483.1 307.8 483.7 307.3 484.2 306.5 484.5 305.7 484.9 304.8 485.8 304.5 485.9 304.0 486.6 303.6 486.7 303.6 487.3 304.0 488.0 304.1 488.7 304.3 488.7 304.2 489.5 304.1 489.9 304.3 490.0 304.2 490.4 303.8 490.7 303.2 491.0 302.2 491.5 301.9 491.7 302.0 492.1 302.2 492.2 302.1 492.6 301.9 493.3 301.8 494.0 301.6 494.5 301.1 494.9 300.6 495.5 300.4 495.9 300.0 496.6 299.0 497.6 298.5 498.1 297.9 498.5 297.1 498.9 296.6 499.2 295.7 499.3 294.9 499.1 294.1 499.2 293.2 499.5 292.6 499.6 292.1 500.0 291.7 500.0 291.4 499.7 290.8 499.4 290.6 499.2 290.7 498.6 290.4 497.9 290.6 497.8 290.6 497.1 290.2 496.2 289.8 495.5 289.2 494.3 288.6 493.6 288.3 493.0 288.1 492.1 287.9 491.5 287.7 490.2 287.7 489.2 287.6 488.7 287.3 488.3 286.9 487.7 286.4 486.6 285.9 485.8 285.5 484.7 285.5 484.2 285.6 483.4 285.9 482.7 285.9 482.3 286.2 481.6 286.3 481.3 286.8 480.8 287.0 480.4 287.1 479.8 287.1 479.3 286.9 479.1 286.5 478.1 286.5 477.9 286.7 477.7 286.3 476.3 285.9 475.8 285.9 475.5 285.8 474.8 285.1 474.0 284.3 473.2 283.7 472.5 283.3 471.8 283.3 471.5 283.4 471.3 283.7 470.7 283.8 470.1 284.1 470.0 283.9 469.1 284.1 468.5 283.7 468.0 283.4 467.8 283.2 467.4 283.0 467.4 283.0 467.1 282.3 467.4 281.9 467.4 281.6 467.6 281.0 467.5 280.6 467.1 280.3 466.5 279.7 466.0 279.2 466.0 278.5 466.0 277.9 466.1 277.2 466.3 276.0 466.7 275.5 467.0 274.8 467.2 274.1 467.0 273.2 466.8 272.8 466.8 271.8 467.0 270.5 467.5 270.3 467.4 269.3 467.1 268.6 466.5 267.9 466.1 267.4 465.6 267.2 465.5 266.7 465.2 266.3 464.8 266.1 464.5 266.0 463.9 265.6 463.4 265.3 463.1 264.9 462.9 264.9 462.5 264.5 462.2 264.1 461.8 263.8 461.8 263.6 461.5 263.3 461.1 263.2 460.5 263.3 460.1 263.0 459.5 262.6 459.3 262.9 459.1 263.3 458.5 263.5 458.1 263.6 457.2 263.8 456.5 263.6 455.7 263.5 455.2 263.6 454.8 263.5 454.4 263.0 454.1 263.1 453.7 263.6 452.6 263.6 452.4 263.9 451.8 264.3 451.2 264.5 451.1 264.8 450.6 264.8 450.1 265.1 449.5 265.6 449.3 266.1 448.4 266.5 448.0 267.2 447.9 267.8 447.3 268.2 447.1 268.9 446.3 268.7 445.1 269.0 444.4 269.1 443.9 269.6 443.3 270.3 442.8 271.0 442.4 271.5 441.5Z" fill="#dddddd" stroke-width="1.05"/>
<path d="M315.2 480.8 315.4 481.1 315.6 481.7 315.7 482.6 315.9 483.0 315.9 483.4 315.7 483.6 315.5 483.1 315.3 483.4 315.5 484.0 315.4 484.3 315.2 484.5 315.1 485.2 314.8 486.1 314.4 487.3 313.9 488.9 313.6 490.1 313.3 491.1 312.0 491.7 311.5 491.4 310.9 491.1 310.7 490.7 310.6 489.9 310.3 489.3 310.3 488.7 310.4 488.0 310.8 487.9 310.8 487.6 311.2 487.0 311.2 486.4 311.0 486.1 310.9 485.5 310.9 484.7 311.1 484.3 311.2 483.8 311.6 483.8 312.0 483.6 312.3 483.4 312.7 483.4 313.1 483.0 313.8 482.5 314.0 482.1 313.9 481.7 314.2 481.8 314.6 481.3 314.7 480.8Z" fill="#dddddd" stroke-width="1.05"/>
<path d="M340.5 465.0 340.3 465.8 340.0 466.0 339.3 466.2 339.0 465.6 338.8 464.5 339.1 463.2 339.7 463.6 340.1 464.1Z" fill="#dddddd" stroke-width="1.05"/>
<path d="M371.8 451.2 370.9 451.1 370.5 451.9 370.6 452.5 370.9 453.2 371.3 452.5 371.6 451.5 371.9 450.7Z" fill="#dddddd" stroke-width="1.05"/>
<path d="M324.3 440.9 325.1 441.3 325.7 441.2 325.9 440.7 326.5 440.6 326.9 440.3 327.1 439.6 327.8 439.4 327.9 439.0 328.2 439.3 328.5 439.3 329.0 439.3 329.5 439.6 329.7 439.7 330.4 439.4 330.6 439.5 330.8 439.1 331.5 439.0 331.5 438.6 331.9 438.2 332.2 438.4 332.2 438.7 332.4 438.8 332.3 439.6 332.6 439.9 332.9 439.8 333.3 439.7 333.8 439.2 334.3 439.3 335.1 439.3 334.8 439.7 334.4 439.9 333.5 439.9 332.6 440.1 332.2 440.5 332.4 440.9 332.5 441.4 332.1 441.9 332.2 442.3 331.9 442.6 331.1 442.5 331.5 443.1 331.0 443.4 330.7 443.9 330.7 444.5 330.4 444.8 330.1 444.7 329.5 444.8 329.4 445.1 328.8 445.1 328.4 445.6 328.3 446.3 327.3 446.7 326.8 446.6 326.6 446.9 326.2 446.7 325.3 446.9 324.1 446.4 324.8 445.6 324.7 445.0 324.1 444.9 323.8 443.5 324.1 443.0 323.8 442.8 324.0 442.2Z" fill="#dddddd" stroke-width="1.05"/>
<path d="M303.8 446.8 304.7 447.0 305.0 446.7 305.1 446.3 305.8 446.2 305.9 446.0 306.2 445.8 305.4 444.9 306.9 444.4 307.1 444.2 308.0 444.5 309.2 445.1 311.4 447.0 312.9 447.1 313.4 446.2 314.0 446.3 314.1 446.7 314.1 446.9 314.3 447.5 314.6 448.3 315.0 448.5 315.2 448.8 315.7 449.2 315.7 449.5 315.6 449.9 315.7 450.1 315.9 450.4 316.2 450.8 316.1 450.2 316.3 449.8 316.6 449.7 316.8 450.0 316.8 450.5 316.7 451.0 316.8 451.3 317.0 451.5 317.6 451.3 318.7 451.4 319.2 450.8 319.8 450.3 320.3 449.7 320.6 449.4 320.6 449.5 320.6 450.7 320.9 451.3 321.4 451.6 321.9 451.8 322.4 451.9 322.8 452.4 323.2 452.8 323.2 453.0 322.8 453.7 322.5 454.0 322.2 454.6 321.8 454.5 321.7 454.7 321.6 455.2 321.7 455.7 321.6 455.8 321.2 455.8 320.7 456.1 320.6 456.5 320.5 456.6 320.0 456.6 319.7 456.9 319.7 457.2 319.3 457.4 318.8 457.4 318.4 457.6 318.0 457.6 317.4 457.9 317.3 458.3 317.3 458.5 316.5 458.8 315.2 459.3 314.5 459.8 314.1 459.9 313.9 459.8 313.5 460.1 313.0 460.3 312.3 460.4 312.1 460.4 312.0 460.6 311.7 460.7 311.6 460.9 311.2 460.9 311.0 460.9 310.5 460.9 310.2 460.5 310.3 460.0 310.1 459.7 310.0 459.2 309.8 458.8 309.9 458.8 309.8 458.4 309.9 458.3 309.9 458.0 309.8 457.5 309.5 457.3 309.5 457.0 309.1 456.7 308.7 456.0 308.4 455.3 307.9 454.7 307.6 454.7 307.0 453.8 306.9 453.2 307.0 452.7 306.5 451.8 306.2 451.4 305.8 451.3 305.5 450.7 305.5 450.6 305.3 450.1 305.1 450.0 304.7 449.3 304.3 448.6 303.9 447.9 303.5 447.9 303.6 447.5 303.6 447.2Z" fill="#dddddd" stroke-width="1.05"/>
<path d="M349.0 453.2 349.0 453.8 348.7 453.6 348.8 454.3 348.5 453.9 348.5 453.5 348.3 453.1 348.0 452.5 347.3 452.5 347.4 452.9 347.1 453.4 346.7 453.2 346.7 453.3 346.4 453.2 346.1 453.1 346.0 452.5 345.7 451.9 345.9 451.3 345.4 451.1 345.6 450.7 346.0 450.5 345.5 450.0 345.8 449.4 346.4 449.8 346.7 449.8 346.8 450.4 347.6 450.6 348.3 450.6 348.8 450.7 348.4 451.4 348.1 451.4 347.8 451.9 348.2 452.4 348.4 451.9 348.5 451.9Z" fill="#dddddd" stroke-width="1.05"/>
<path d="M307.7 433.1 307.8 432.9 308.4 433.1 309.6 433.3 310.7 433.8 310.8 433.9 311.2 433.8 312.0 434.0 312.3 434.5 312.7 434.7 313.0 434.8 313.5 435.4 313.8 435.4 314.0 435.2 314.5 434.8 314.8 435.3 315.2 436.0 315.6 436.1 315.9 436.3 315.2 436.4 315.1 437.3 314.9 437.7 314.7 437.9 314.7 438.4 314.5 438.4 314.0 437.9 314.3 437.4 314.1 437.1 313.8 437.2 312.8 437.9 312.5 438.0 312.2 437.4 312.2 437.2 311.9 437.2 311.6 437.0 311.5 437.0 311.2 436.7 310.6 436.3 310.7 435.9 310.5 435.5 309.8 435.0 309.0 435.1 309.1 434.6 308.9 433.9 308.0 433.4Z" fill="#dddddd" stroke-width="1.05"/>
<path d="M361.1 453.6 360.0 454.3 359.4 455.1 359.2 455.7 359.7 456.6 360.5 457.6 361.2 458.1 361.7 458.8 362.0 460.3 361.9 461.7 361.3 462.2 360.4 462.7 359.7 463.4 358.8 464.1 358.5 463.7 358.7 463.1 358.1 462.6 357.5 462.5 357.2 462.1 356.8 461.3 356.5 460.3 357.1 459.7 358.1 459.5 358.8 459.6 359.0 459.3 359.1 458.5 358.5 457.9 358.4 457.1 357.8 456.4 357.2 456.3 357.1 456.6 356.6 456.6 356.4 456.5 355.6 457.0 355.5 456.2 355.7 455.3 355.2 455.3 355.1 454.8 354.8 454.6 355.0 454.2 355.7 453.7 355.7 453.9 356.1 453.9 356.1 453.0 356.5 452.8 356.8 452.6 357.5 452.6 358.3 452.5 358.9 452.0 359.3 452.4 360.0 452.5 359.9 453.1 360.2 453.4Z" fill="#dddddd" stroke-width="1.05"/>
<path d="M318.6 439.5 319.3 439.3 319.9 438.7 320.4 438.8 320.7 438.6 321.3 438.7 322.1 439.2 322.8 439.3 323.7 440.1 324.3 440.1 324.3 440.9 324.0 442.2 323.8 442.8 324.1 443.0 323.8 443.5 324.1 444.9 324.7 445.0 324.8 445.6 324.1 446.4 324.5 446.9 324.8 447.4 325.5 447.8 325.6 448.6 325.9 448.7 326.0 449.1 324.9 449.6 324.6 450.6 323.1 450.3 322.2 450.1 321.4 450.1 321.0 448.9 320.6 448.8 320.0 449.0 319.2 449.4 318.3 449.1 317.5 448.4 316.7 448.1 316.3 447.3 315.6 446.2 315.2 446.3 314.7 446.0 314.5 446.3 314.0 445.8 314.0 445.3 313.8 445.3 313.8 444.7 313.4 443.9 312.5 443.5 312.0 442.5 312.1 441.9 312.6 441.5 312.5 440.9 312.0 440.7 311.5 439.5 311.0 438.7 311.2 438.4 310.9 437.3 311.5 437.0 311.6 437.0 311.9 437.2 312.2 437.2 312.2 437.4 312.5 438.0 312.8 437.9 313.8 437.2 314.1 437.1 314.3 437.4 314.0 437.9 314.5 438.4 314.7 438.4 314.9 439.1 315.6 439.3 316.2 439.8 317.4 439.9 318.5 439.7Z" fill="#dddddd" stroke-width="1.05"/>
<path d="M312.0 440.7 312.5 440.9 312.6 441.5 312.1 441.9 312.0 442.5 312.5 443.5 313.4 443.9 313.8 444.7 313.8 445.3 314.0 445.3 314.0 445.8 314.5 446.3 314.0 446.3 313.4 446.2 312.9 447.1 311.4 447.0 309.2 445.1 308.0 444.5 307.1 444.2 306.8 443.1 308.5 442.2 308.8 441.0 308.7 440.2 309.1 440.0 309.5 439.5 309.9 439.3 310.8 439.4 311.1 439.7 311.5 439.5 312.0 440.7Z" fill="#dddddd" stroke-width="1.05"/>
<path d="M386.9 439.6 386.5 440.3 386.7 440.8 386.3 441.5 385.3 441.9 383.9 442.0 382.8 443.0 382.2 442.7 382.2 442.0 380.8 442.2 380.0 442.6 379.0 442.6 379.8 443.4 379.3 444.9 378.8 445.3 378.4 445.0 378.5 444.1 378.1 443.9 377.8 443.2 378.5 442.9 378.9 442.4 379.7 441.9 380.3 441.2 381.8 440.9 382.7 441.1 383.5 439.4 384.0 439.9 385.2 438.9 385.6 438.5 386.1 437.3 386.0 436.0 386.3 435.4 387.2 435.2 387.6 436.7 387.6 437.5 386.8 438.5ZM389.1 432.2 389.7 432.5 390.2 432.0 390.4 433.2 389.3 433.5 388.6 434.6 387.3 433.8 386.9 435.0 386.0 435.0 385.9 433.9 386.3 433.2 387.2 433.1 387.4 431.6 387.6 430.7ZM381.8 442.4 382.0 442.7 381.5 443.3 381.2 443.0 380.8 443.2 380.6 443.8 380.1 443.5 380.1 443.0 380.5 442.4 381.0 442.6 381.3 442.2Z" fill="#dddddd" stroke-width="1.05"/>
<path d="M378.7 434.2 378.9 434.4 378.5 434.3 378.2 434.7 378.0 435.0 378.0 435.7 378.0 435.7 377.6 435.9 377.5 436.1 377.1 436.4 376.6 436.7 376.3 436.9 376.3 437.4 376.2 437.5 376.5 437.6 376.9 438.1 377.6 439.3 377.8 439.9 377.8 441.0 377.5 441.5 376.8 441.7 376.2 442.1 375.5 442.2 375.4 441.7 375.6 440.9 375.2 439.9 375.8 439.8 375.3 439.0 374.9 438.8 374.6 439.0 374.5 438.8 374.1 438.6 374.3 438.2 374.5 438.0 374.4 437.7 374.6 437.3 374.1 437.0 373.8 436.8 374.4 436.0 375.3 435.5 375.8 434.8 376.1 435.1 376.8 435.1 376.7 434.6 377.9 434.2 378.2 433.5Z" fill="#dddddd" stroke-width="1.05"/>
<path d="M332.0 434.3 332.2 433.8 332.6 433.7 334.0 434.0 334.0 433.4 334.5 433.2 335.6 433.6 335.9 433.5 337.3 433.6 338.4 433.6 338.7 434.0 339.3 434.3 339.1 434.5 337.9 435.0 337.6 435.4 336.6 435.5 336.3 436.2 335.5 436.0 335.0 436.2 334.2 436.8 334.3 437.0 334.1 437.3 334.3 438.2 334.6 438.1 335.1 438.3 335.0 438.7 335.1 439.3 334.3 439.3 333.8 439.2 333.3 439.7 332.9 439.8 332.6 439.9 332.3 439.6 332.4 438.8 332.2 438.7 332.2 438.4 331.9 438.2 331.5 438.6 331.5 439.0 330.8 439.1 330.6 439.5 330.4 439.4 329.7 439.7 329.5 439.6 330.0 438.5 329.8 437.8 329.2 437.6 329.4 437.1 330.0 437.2 330.4 436.5 330.7 435.9 331.8 435.7 331.6 436.1 331.7 436.4 332.0 436.4 332.6 436.5 333.7 435.7 332.7 435.2 332.2 435.5 331.5 435.1 332.2 434.4Z" fill="#dddddd" stroke-width="1.05"/>
<path d="M355.6 466.0 355.7 466.4 356.1 466.3 356.4 466.0 356.6 466.1 357.0 466.6 357.4 467.1 357.4 467.6 357.3 468.0 357.4 468.2 357.5 468.7 357.8 468.9 358.0 469.6 358.0 469.9 357.5 470.0 356.8 469.4 355.8 468.7 355.7 468.3 355.3 467.8 355.2 467.1 354.9 466.7 355.0 466.2 354.8 465.8 355.0 465.7Z" fill="#dddddd" stroke-width="1.05"/>
<path d="M354.3 454.7 353.9 455.1 353.4 455.2 353.0 456.1 352.7 456.2 353.1 456.9 353.6 457.5 353.9 458.0 353.6 458.8 353.3 458.9 353.5 459.3 354.0 460.0 354.1 460.4 354.1 460.8 354.4 461.5 353.9 462.3 353.6 463.1 353.6 462.5 353.8 461.9 353.5 461.4 353.6 460.5 353.2 460.1 353.0 459.2 352.8 458.1 352.5 457.5 352.0 457.9 351.1 458.4 350.7 458.4 350.2 458.2 350.4 457.1 350.3 456.4 349.6 455.4 349.8 455.2 349.3 455.0 348.8 454.3 348.7 453.6 349.0 453.8 349.0 453.2 349.4 453.0 349.3 452.6 349.5 452.4 349.5 451.4 350.1 451.6 350.5 450.9 350.5 450.5 351.0 449.8 350.9 449.3 351.9 448.7 352.5 448.8 352.4 448.3 352.7 448.1 352.6 447.8 353.1 447.8 353.3 448.3 353.7 448.5 353.7 449.2 353.7 449.9 352.9 450.6 352.8 451.6 353.7 451.4 353.9 452.3 354.3 452.5 354.1 453.1 354.7 453.5 355.0 453.6 355.7 453.4 355.7 453.7 355.0 454.2 354.8 454.6Z" fill="#dddddd" stroke-width="1.05"/>
<path d="M339.9 446.1 340.2 445.9 340.9 446.2 341.6 446.7 342.1 446.9 342.4 447.3 343.0 447.5 343.6 447.9 344.5 448.1 345.4 448.1 345.3 448.6 345.5 449.1 345.4 449.4 344.7 449.4 343.8 449.3 343.2 449.2 342.7 448.7 341.6 448.6 340.6 448.1 339.9 447.7 339.1 447.3 339.5 446.5ZM346.0 448.7 346.5 448.0 346.9 447.8 347.4 447.9 347.9 448.0 348.2 448.2 348.5 448.5 348.5 449.1 347.8 449.1 347.2 449.0 346.7 449.2 346.0 448.8Z" fill="#dddddd" stroke-width="1.05"/>
<path d="M335.1 439.3 335.3 439.6 335.8 439.9 336.1 440.7 337.3 441.1 336.6 441.9 335.8 442.1 334.5 441.9 334.1 442.3 334.4 443.1 334.8 443.7 335.4 444.1 334.7 444.7 334.7 445.3 334.0 446.3 333.4 447.2 332.6 448.1 331.7 448.0 330.8 449.0 331.4 449.4 331.5 450.1 331.9 450.5 332.0 451.2 330.3 451.2 329.8 451.8 329.2 451.6 329.0 450.9 328.4 450.3 326.9 450.5 325.7 450.5 324.6 450.6 324.9 449.6 326.0 449.1 325.9 448.7 325.6 448.6 325.5 447.8 324.8 447.4 324.5 446.9 324.1 446.4 325.3 446.9 326.2 446.7 326.6 446.9 326.8 446.6 327.3 446.7 328.3 446.3 328.4 445.6 328.8 445.1 329.4 445.1 329.5 444.8 330.1 444.7 330.4 444.8 330.7 444.5 330.7 443.9 331.0 443.4 331.5 443.1 331.1 442.5 331.9 442.6 332.2 442.3 332.1 441.9 332.5 441.4 332.4 440.9 332.2 440.5 332.6 440.1 333.5 439.9 334.4 439.9 334.8 439.7Z" fill="#dddddd" stroke-width="1.05"/>
<path d="M306.8 443.1 305.2 444.1 304.4 443.8 304.4 443.6 304.4 443.2 304.7 442.7 305.1 442.4 304.6 442.0 304.5 441.2 304.7 440.8 305.1 440.3 305.1 439.9 305.4 440.0 306.3 439.8 306.7 439.9 307.3 439.9 308.3 439.6 308.7 439.6 309.5 439.5 309.1 440.0 308.7 440.2 308.8 441.0 308.5 442.2ZM304.4 443.8 305.2 444.1 306.8 443.1 307.1 444.2 306.9 444.4 305.4 444.9 306.2 445.8 305.9 446.0 305.8 446.2 305.1 446.3 305.0 446.7 304.7 447.0 303.8 446.8 303.7 446.7 304.1 445.2 304.2 444.6 304.0 443.9ZM304.4 443.2 304.4 443.6 304.4 443.8 304.0 443.9 304.2 444.6 304.1 445.2 303.7 446.7 303.3 445.1 303.5 444.9 303.7 443.7 303.9 443.4 304.2 443.4 303.9 443.4 304.2 442.6 304.6 442.0 304.6 442.0 305.1 442.4 304.7 442.7Z" fill="#dddddd" stroke-width="1.05"/>
<path d="M356.8 461.3 356.1 460.9 355.4 460.9 355.5 460.3 354.8 460.3 354.7 461.2 354.3 462.4 354.1 463.7 354.7 463.7 355.0 464.4 355.1 465.1 355.5 465.5 356.0 465.6 356.4 466.0 356.1 466.3 355.7 466.4 355.6 466.0 355.0 465.7 354.8 465.8 354.5 465.6 354.3 465.2 353.9 464.7 353.6 464.3 353.4 464.8 353.3 464.3 353.4 463.8 353.6 463.1 353.9 462.3 354.4 461.5 354.1 460.8 354.1 460.4 354.0 460.0 353.5 459.3 353.3 458.9 353.6 458.8 353.9 458.0 353.6 457.5 353.1 456.9 352.7 456.2 353.0 456.1 353.4 455.2 353.9 455.1 354.3 454.7 354.8 454.6 355.1 454.8 355.2 455.3 355.7 455.3 355.5 456.2 355.6 457.0 356.4 456.5 356.6 456.6 357.1 456.6 357.2 456.3 357.8 456.4 358.4 457.1 358.5 457.9 359.1 458.5 359.0 459.3 358.8 459.6 358.1 459.5 357.1 459.7 356.5 460.3 356.8 461.3Z" fill="#dddddd" stroke-width="1.05"/>
<path d="M305.3 435.3 306.4 435.7 307.3 435.5 308.0 435.6 309.0 435.1 309.8 435.0 310.5 435.5 310.7 435.9 310.6 436.3 311.2 436.7 311.5 437.0 310.9 437.3 311.2 438.4 311.0 438.7 311.5 439.5 311.1 439.7 310.8 439.4 309.9 439.3 309.5 439.5 308.7 439.6 308.3 439.6 307.3 439.9 306.7 439.9 306.3 439.8 305.4 440.0 305.1 440.3 305.1 439.9 304.7 440.8 304.4 440.3 304.7 439.9 304.3 440.0 303.6 439.9 303.0 440.4 301.8 440.5 301.2 440.0 300.4 439.9 300.2 440.3 299.6 440.5 298.9 439.9 298.0 439.9 297.5 439.0 297.0 438.5 297.4 437.7 296.9 437.2 297.8 436.2 298.9 436.1 299.3 435.4 300.7 435.5 301.7 434.9 302.6 434.6 304.0 434.6 305.3 435.3ZM296.8 434.8 297.6 434.5 298.3 434.6 298.4 435.0 299.1 435.3 298.9 435.5 298.0 435.6 297.7 435.9 297.1 436.4 296.8 436.0 296.8 435.8 297.0 435.7 297.2 435.0Z" fill="#dddddd" stroke-width="1.05"/>
<path d="M317.5 434.8 317.8 434.5 318.8 434.3 319.3 434.6 319.9 435.3 320.2 435.3 320.2 431.3 322.2 430.7 324.3 432.0 325.0 433.0 325.9 432.8 327.2 432.8 328.2 433.5 328.1 434.6 328.5 434.6 328.6 435.4 329.7 435.5 329.9 435.9 330.1 435.9 330.5 435.2 331.5 434.5 332.0 434.3 332.2 434.4 331.5 435.1 332.2 435.5 332.7 435.2 333.7 435.7 332.6 436.5 332.0 436.4 331.7 436.4 331.6 436.1 331.8 435.7 330.7 435.9 330.4 436.5 330.0 437.2 329.4 437.1 329.2 437.6 329.8 437.8 330.0 438.5 329.5 439.6 329.0 439.3 328.5 439.3 328.2 439.3 327.9 439.0 327.8 439.4 327.1 439.6 326.9 440.3 326.5 440.6 325.9 440.7 325.7 441.2 325.1 441.3 324.3 440.9 324.3 440.1 323.7 440.1 322.8 439.3 322.1 439.2 321.3 438.7 320.7 438.6 320.4 438.8 319.9 438.7 319.3 439.3 318.6 439.5 318.5 438.8 318.6 437.7 318.0 437.4 318.2 436.7 317.7 436.7 317.8 435.7 318.6 436.0 319.2 435.7 318.7 435.0 318.5 434.5 317.8 434.7Z" fill="#dddddd" stroke-width="1.05"/>
<path d="M386.9 478.1 386.1 477.4 385.4 477.3 385.2 477.5 384.2 477.5 384.5 476.9 385.1 476.6 384.8 475.8 384.4 475.1 382.9 474.4 382.3 474.4 381.1 473.6 380.9 474.0 380.6 474.1 380.4 473.8 380.4 473.5 379.8 473.1 380.7 472.9 381.2 472.9 381.1 472.6 380.0 472.6 379.6 472.2 378.9 472.0 378.6 471.6 379.7 471.4 380.1 471.2 381.4 471.5 381.4 471.8 381.7 473.1 382.5 473.6 383.2 472.7 384.0 472.2 384.7 472.2 385.4 472.5 386.0 472.8 386.9 472.9ZM368.8 467.7 368.3 468.4 368.8 469.1 368.8 469.5 369.6 470.2 368.7 470.3 368.4 470.8 368.4 471.5 367.7 472.1 367.7 472.9 367.3 474.0 367.3 473.8 366.4 474.1 366.1 473.6 365.5 473.6 365.2 473.3 364.2 473.6 363.9 473.2 363.3 473.3 362.7 473.2 362.6 472.2 362.3 471.9 361.9 471.3 361.7 470.6 361.9 469.9 362.3 469.3 362.9 469.6 363.5 469.4 363.7 468.8 364.9 468.5 365.9 467.4 366.2 467.8 366.4 467.5 366.7 467.5 366.9 466.7 367.4 466.1 367.8 465.5 368.1 465.5 368.6 465.9 368.6 466.2 369.8 466.7 369.7 467.0 369.1 467.0 369.3 467.4ZM359.3 475.5 358.4 475.5 357.8 474.8 356.8 474.2 356.5 473.7 355.8 473.1 355.4 472.5 354.8 471.4 354.2 470.7 353.9 470.1 353.6 469.5 352.9 468.9 352.5 468.3 351.9 467.8 351.1 467.0 351.0 466.6 351.5 466.7 352.8 466.8 353.5 467.5 354.0 468.1 354.5 468.4 355.2 469.3 356.1 469.3 356.7 469.8 357.2 470.4 357.7 470.8 357.4 471.4 357.9 471.8 358.2 471.8 358.3 472.3 358.6 472.7 359.1 472.8 359.5 473.3 359.4 474.3ZM361.5 476.2 363.0 476.3 363.2 476.0 364.6 476.3 364.9 476.9 366.1 477.0 367.0 477.5 366.2 477.8 365.3 477.4 364.6 477.5 363.7 477.4 363.0 477.3 362.1 477.0 361.5 476.9 361.2 477.0 359.8 476.7 359.7 476.3 359.0 476.3 359.5 475.5 360.4 475.6ZM374.5 469.8 373.8 470.6 373.3 470.7 372.5 470.6 371.3 470.6 370.6 470.7 370.5 471.3 371.1 472.0 371.6 471.7 373.0 471.4 373.0 471.8 372.6 471.6 372.3 472.1 371.6 472.4 372.4 473.4 372.2 473.6 372.9 474.6 372.9 475.1 372.4 475.3 372.1 475.1 372.5 474.4 371.7 474.7 371.6 474.5 371.7 474.2 371.1 473.7 371.2 472.9 370.6 473.2 370.7 474.1 370.7 475.2 370.2 475.4 369.9 475.1 370.2 474.4 370.0 473.6 369.7 473.6 369.5 473.1 369.8 472.5 369.9 472.0 370.2 470.7 370.4 470.4 371.1 469.9 371.7 470.1 372.7 470.2 373.6 470.2 374.4 469.6ZM374.3 477.9 374.4 478.3 373.8 478.9 373.2 479.1 373.1 478.9 373.2 478.7 373.5 478.2ZM374.4 477.7 375.9 477.4 376.1 477.5 375.9 477.7 375.0 478.1 374.4 478.3ZM371.4 477.6 372.0 477.6 372.7 477.3 372.6 477.7 371.4 477.9 370.3 477.8 370.3 477.5 370.9 477.3ZM368.8 477.3 369.1 477.5 369.5 477.4 369.7 477.7 368.3 478.0 367.8 478.0 368.1 477.6 368.5 477.5ZM377.2 470.0 377.1 470.7 376.7 470.6 376.6 471.1 377.0 471.5 376.7 471.6 376.4 471.1 376.7 470.6 376.4 469.5 376.6 469.2 376.7 469.6 377.1 469.7ZM377.8 473.1 378.6 473.3 378.9 474.0 378.2 473.6 377.6 473.6 377.1 473.6 376.6 473.6 376.7 473.1ZM375.9 473.3 376.0 473.6 375.8 473.9 375.3 473.7 375.1 473.4Z" fill="#dddddd" stroke-width="1.05"/>
<path d="M411.9 506.1 412.1 506.5 412.7 506.1 412.9 506.5 412.9 507.0 412.6 507.4 412.1 508.3 411.7 508.7 412.0 509.3 411.4 509.3 410.8 509.6 410.5 510.4 410.0 511.5 409.4 512.0 409.0 512.3 408.3 512.3 407.9 511.9 407.0 511.8 406.8 511.5 407.2 510.6 408.2 509.5 408.7 509.3 409.3 508.9 410.0 508.3 410.4 507.8 410.8 507.0 411.1 506.7 411.2 506.1 411.8 505.7ZM413.2 501.4 413.7 502.3 413.8 501.7 414.1 501.9 414.3 502.7 414.9 503.0 415.4 503.1 415.8 502.7 416.2 502.8 416.1 503.7 415.8 504.3 415.2 504.2 415.0 504.5 415.1 505.0 415.0 505.3 414.3 506.5 413.6 506.9 413.6 506.6 413.3 506.5 413.6 505.7 413.4 505.0 412.6 504.6 412.6 504.2 413.2 503.9 413.3 503.1 413.3 502.5 412.9 501.9 412.9 501.7 412.6 501.3 412.0 500.4 411.6 499.7 411.9 499.7 412.4 500.2 412.9 500.5Z" fill="#dddddd" stroke-width="1.05"/>
<path d="M371.4 456.1 371.9 456.4 372.1 456.1 372.2 456.4 372.1 456.7 372.4 457.3 372.2 458.0 371.7 458.3 371.6 458.9 371.7 459.6 372.2 459.7 372.5 459.6 373.5 460.0 373.5 460.5 373.7 460.6 373.6 461.0 373.0 460.6 372.7 460.1 372.5 460.5 372.0 460.0 371.3 460.1 370.9 459.9 370.9 459.6 371.2 459.4 370.9 459.2 370.9 459.5 370.5 459.0 370.3 458.7 370.3 457.9 370.6 458.2 370.7 456.9 370.9 456.1ZM375.4 464.3 375.5 464.8 375.5 465.2 375.3 466.0 374.9 465.2 374.6 465.6 374.9 466.2 374.6 466.5 373.7 466.0 373.5 465.5 373.7 465.1 373.2 464.8 373.0 465.1 372.6 465.0 372.0 465.5 371.9 465.2 372.2 464.6 372.7 464.4 373.1 464.1 373.4 464.5 374.0 464.2 374.2 463.9 374.7 463.8 374.6 463.2 375.3 463.6 375.3 464.0ZM370.0 461.9 370.2 462.5 369.6 463.0 369.2 463.6 368.2 464.3 368.6 463.7 369.1 463.3 369.6 462.7ZM373.8 460.9 374.5 461.0 374.7 461.3 374.9 462.2 374.3 462.0 374.3 462.2 374.6 462.7 374.2 462.9 374.2 462.4 373.9 462.3 373.8 461.8 374.2 461.9 374.2 461.6 373.8 460.9ZM373.5 462.8 373.2 463.1 373.0 463.6 372.8 463.8 372.3 463.3 372.6 462.8 372.7 462.3 373.1 462.3 373.0 462.8Z" fill="#dddddd" stroke-width="1.05"/>
<path d="M386.9 472.9 388.2 473.5 389.7 474.0 390.2 474.4 390.6 474.7 390.8 475.2 392.0 475.7 392.3 476.1 391.5 476.2 391.7 476.7 392.4 477.2 392.9 478.1 393.4 478.1 393.4 478.4 393.9 478.5 393.7 478.7 394.5 479.0 394.5 479.3 393.9 479.3 393.7 479.1 392.3 478.9 391.6 478.4 391.2 477.9 390.8 477.3 389.8 476.9 389.1 477.1 388.7 477.3 388.7 478.0 388.1 478.2 386.9 478.1ZM395.9 473.8 396.3 474.4 396.1 474.7 395.8 474.3 395.5 475.2 395.1 475.3 394.9 475.5 394.5 475.7 394.1 475.8 393.7 475.8 393.0 475.6 392.6 475.4 392.7 475.1 393.4 475.3 393.7 475.2 393.9 474.8 394.0 474.8 394.1 475.2 394.5 475.2 394.8 474.9 395.2 474.7 395.1 474.2 395.6 474.1Z" fill="#dddddd" stroke-width="1.05"/>
<path d="M296.1 444.8 296.0 447.0 296.0 453.2 296.0 454.9M296.0 453.2 305.3 453.2M285.4 443.4 284.5 444.6 283.8 446.0M283.0 439.7 282.8 440.2 283.0 441.1 282.7 441.9 282.3 442.4 282.3 443.2 283.0 443.8 283.5 444.3 283.8 446.0M285.8 451.9 287.4 452.8 288.1 452.4 288.8 452.0 291.9 453.6 295.2 455.3 295.2 454.9 296.0 454.9M295.2 455.3 295.1 458.5 294.1 459.1 293.9 460.3 293.5 460.9 294.0 462.2 294.3 462.1M288.8 452.0 288.2 453.8 288.5 454.3 288.8 454.6 288.7 454.9 288.4 456.6 288.3 457.7 287.3 458.4 287.0 459.5 287.3 460.3M279.7 455.6 279.7 457.5 279.2 458.5 277.5 458.8 276.7 459.1M272.5 450.7 271.3 450.7 271.7 454.4 272.1 457.9 272.2 458.0 272.0 458.6 268.9 458.6 268.0 458.9 267.5 458.7 267.2 458.7 266.8 459.3M266.8 459.3 266.3 458.8 265.8 458.2 265.0 457.7 263.7 457.8 263.5 458.1M266.8 459.3 267.4 461.1 266.8 461.1 265.6 461.0 264.2 460.9 263.3 461.1M263.3 460.1 264.2 460.1 264.9 460.4 265.6 460.2 264.5 459.9 263.3 460.1M265.6 461.0 265.6 461.6 265.3 461.7 264.9 461.8 264.5 462.2M267.4 461.1 268.4 461.6 269.8 461.9 270.1 462.9 271.6 462.9 272.1 462.7 272.3 461.7 272.9 461.0 274.0 460.2 274.8 459.4 276.2 459.1 276.7 459.1M266.0 463.9 266.7 463.2 267.7 463.0 267.9 463.3 268.4 464.3 267.4 465.6M268.4 464.3 269.1 464.7 269.8 464.9 269.6 465.8 270.4 466.4 270.5 467.5M270.1 462.9 269.9 463.2 270.0 463.5 270.3 464.1 269.8 464.9M276.7 459.1 276.6 459.5 277.2 460.4 278.1 460.9 278.1 461.5 279.2 461.7 279.2 462.0M279.2 461.7 279.3 461.0 279.5 460.7 279.6 460.2 280.6 459.9 281.4 460.2 282.1 460.5 282.6 460.6 283.4 460.8 284.8 460.4 286.0 460.6 286.6 460.1 286.8 460.2 287.3 460.3M279.2 462.0 279.4 462.4 278.5 464.2 278.5 464.7 278.5 466.0M287.3 460.3 287.5 461.0 287.8 461.4 287.7 461.5 287.0 462.4 286.4 464.0 285.6 465.4 285.0 465.7 284.3 465.4 283.6 465.8 283.0 467.2M274.1 467.0 273.8 466.0 274.4 464.4 274.2 463.3 274.1 462.7 274.1 462.3M272.1 462.7 272.6 463.2 273.6 463.1 274.2 463.3M274.1 462.3 275.4 462.2 276.4 462.2 277.1 462.2 278.1 461.5M277.2 466.2 276.8 465.5 276.7 464.1 276.4 462.2M277.7 466.2 277.6 465.5 277.7 463.7 277.1 462.2M287.7 460.7 288.5 463.0 287.3 463.4 288.4 465.1 287.8 466.0 287.7 466.6 287.8 467.0 288.8 468.5 288.9 469.1M288.4 465.1 289.5 465.0 290.8 464.4 291.2 464.1 292.1 463.8 293.4 462.6 294.3 462.1M294.3 462.1 294.8 463.0 294.8 463.9 295.6 464.4 296.1 465.0 296.9 465.8 297.8 466.8M288.9 469.1 289.3 468.4 290.8 468.2 290.9 467.6 291.6 467.0 292.8 467.5 293.9 467.7 294.3 467.2 295.5 466.9 296.5 466.8 297.6 466.9 297.8 466.8 298.7 467.5 299.7 467.3 300.5 468.1M295.6 464.4 296.0 462.8 296.6 462.7 297.1 463.4 298.2 463.3 299.1 463.5 299.6 463.0 300.5 463.3 300.9 463.2 301.8 461.7 302.4 461.3 302.3 462.6 303.0 463.4M306.5 456.6 306.1 457.0 305.5 457.2 305.3 457.4 304.8 459.2 304.8 460.2 304.5 461.0 304.0 461.4 303.6 462.3 303.2 462.5 303.0 463.4 302.9 464.3 302.5 464.3 303.0 465.2 303.2 465.5 303.6 465.7 304.0 466.6 303.5 467.1 304.4 467.2 304.4 466.7 304.7 467.4 305.3 467.4 306.2 468.1 306.7 468.1 307.4 468.2 307.6 467.9 308.3 467.6 308.6 467.8 309.2 467.8M304.9 459.5 305.8 459.7 306.1 459.0 306.6 459.4 307.0 459.2 307.2 459.4 307.7 459.4 308.4 459.7 308.6 460.0 309.0 460.3 309.3 460.7 309.6 461.0 310.1 460.9M309.6 461.0 309.3 461.3 309.0 461.7 309.1 461.9 309.1 462.2 309.5 462.2 309.7 462.1 309.9 462.3 309.7 462.6 310.0 463.0 310.3 463.4 310.6 463.7 313.2 464.6 313.8 464.6 311.6 467.0 310.6 467.0 309.9 467.6 309.4 467.6 309.2 467.8M309.9 462.3 310.2 461.9M309.2 467.8 308.5 468.7 308.5 471.6 309.0 472.2M303.5 467.1 303.4 468.1 303.5 468.5 303.8 469.4 303.5 470.0 303.2 470.5 302.9 470.8 302.9 471.6 305.9 473.3 306.0 473.8 307.1 474.6M300.5 468.1 300.8 469.2 300.0 470.1 299.8 470.4 299.7 471.1 299.6 471.4 299.6 471.9 299.3 472.2 299.3 472.6 299.2 472.7 299.1 473.1 299.3 473.5 299.4 474.4 299.5 475.2 299.4 475.6 299.6 476.0 300.0 476.5 300.5 477.5M300.5 468.1 301.4 468.1 302.0 467.9 302.5 467.9 303.0 467.6 303.5 467.1M302.9 471.6 301.4 471.7 300.5 471.7 300.2 471.8 300.5 472.2 300.5 472.7 300.3 472.8 300.5 473.5 300.3 473.7 300.0 474.1 299.7 474.4 299.4 474.4M299.6 471.9 300.2 471.8M299.1 473.1 299.6 473.2 300.3 472.8M308.0 479.0 307.3 479.5 306.5 479.8 306.0 479.8 305.7 480.0 305.2 480.0 305.0 480.1 304.0 479.9 303.5 480.0 303.2 478.9 303.0 478.5 302.8 478.3 302.0 478.2 301.6 477.9 301.1 477.8 300.8 477.7 300.5 477.5M300.5 477.5 298.9 477.6 298.7 478.1 298.8 478.5 298.7 479.4 298.6 480.2 298.8 480.3 299.4 480.7 299.6 480.5 299.6 481.4 299.0 481.4 298.7 480.9 298.4 480.6 297.8 480.5 297.7 480.1 297.2 480.3 296.6 480.2 296.3 479.8 295.8 479.8 295.4 479.8 295.4 479.5 295.1 479.5 294.8 479.5 294.3 479.6 293.9 479.6 293.7 479.6 293.8 478.7 293.5 478.4 293.5 477.9 293.6 477.4 293.4 477.1 293.4 476.6 292.4 476.6 292.5 476.4 292.1 476.4 292.1 476.5 291.6 476.5 291.4 477.0 291.3 477.2 290.8 477.1 290.6 477.2 290.1 477.2 289.8 476.8 289.6 476.6 289.4 476.1 289.2 475.5 286.9 475.5 286.6 475.6 286.4 475.6 286.0 475.7M285.9 475.5 286.6 474.6 286.8 474.7 287.0 474.4 287.5 474.4 287.5 474.7 287.8 474.8 288.3 474.3 288.7 473.9 288.9 473.7 288.9 473.0 289.2 472.3 289.6 471.9 290.1 471.5 290.2 471.2 290.2 470.9 290.3 470.7 290.3 470.2 290.4 469.5 290.6 469.0 290.8 468.6 290.8 468.2M285.1 474.0 285.7 473.6 285.4 473.1 285.6 472.9 286.2 472.8 286.2 472.4 286.7 472.8 287.3 472.8 287.6 472.5 287.7 471.9 287.6 471.3 287.2 470.9 287.6 470.0 287.4 469.8 286.8 469.9 286.6 469.1 286.6 469.1 287.6 469.2 288.3 469.4 288.9 469.5 288.9 469.1M283.9 469.1 285.2 469.1 286.5 469.1 286.6 469.1M283.9 470.1 285.2 470.1 285.2 469.1M300.1 483.2 299.5 483.3 299.1 483.6 299.0 483.9 298.7 484.0 298.0 484.7 297.6 485.2 297.3 485.2 297.0 485.1 296.2 485.0 296.0 485.0 295.7 484.7 295.2 484.7 294.6 484.8 293.1 485.2 291.2 485.1 290.7 484.7 287.5 484.7 287.4 484.8 286.9 484.4 286.4 484.4 286.0 484.5 285.6 484.7M295.1 479.5 295.2 479.8 295.1 480.1 295.2 480.5 295.1 480.8 295.2 481.1 293.6 481.1 293.5 483.7 294.1 484.3 294.6 484.8M302.0 478.2 302.4 478.5 302.6 479.2 302.5 479.4 302.3 480.1 302.5 480.7 302.2 481.0 302.0 481.7 302.4 482.0 300.0 482.6 300.1 483.2 300.2 483.6M303.5 480.0 303.2 480.6 303.5 481.6 303.7 481.6 304.0 481.9 304.3 482.5 304.4 483.5 304.1 483.7 303.8 484.3 303.3 483.7 303.3 483.2 303.4 482.8 303.4 482.5 303.1 482.3 302.9 482.3 302.4 482.0M300.2 483.6 300.8 483.5 301.2 483.7 301.3 483.9 301.7 483.9 302.1 484.2 302.1 485.2 302.0 485.8 301.9 486.4 302.1 486.7 302.0 487.1 301.9 487.2 301.6 487.8 300.8 488.8 300.4 488.7 299.4 488.7 298.9 488.3 298.3 488.1 298.1 487.6 298.1 487.3 297.8 487.2 296.9 486.3 296.6 485.8 296.5 485.7 296.2 485.0M300.8 488.8 301.2 490.0 301.4 490.6 301.3 491.6 301.3 491.9 300.9 491.7 300.7 491.8 300.6 492.0 300.4 492.4 300.4 492.7 300.9 493.1 301.4 493.0 301.5 492.6 302.1 492.7M301.3 491.9 301.5 492.6M299.4 488.7 298.3 489.3 297.6 489.9 297.4 490.5 297.1 490.8 296.7 490.9 296.6 491.3 296.5 491.6 296.0 491.8 295.3 491.7 295.0 491.5 294.6 491.4 294.3 491.6 294.1 492.0 293.7 492.3 293.3 492.6 292.7 492.7 292.6 492.4 292.6 491.9 292.2 491.1 292.0 490.9 292.0 494.2 291.3 494.6 290.8 494.7 290.4 494.5 290.0 494.5 289.9 494.1 289.6 493.8 289.2 494.3M292.0 490.9 292.0 488.5 292.7 488.4 292.8 485.4 293.4 485.4 294.6 485.1 294.9 485.5 295.4 485.2 295.6 485.2 296.0 485.0M299.1 494.6 299.4 494.9 299.1 495.3 299.0 495.6 298.5 495.8 298.4 496.1 298.1 496.1 297.5 495.5 297.9 494.9 298.4 494.5 298.7 494.3 299.1 494.6M269.6 448.6 269.6 449.9 267.0 449.9 267.0 452.1 266.3 452.1 266.1 452.6 266.2 453.8 263.2 453.8 263.0 454.1" fill="none" stroke-width="1.05"/>
<path d="M317.3 458.5 317.1 455.7 314.8 456.1 314.1 456.4 313.6 457.3 313.2 457.5 313.0 457.1 312.7 457.2 312.0 457.1 311.8 457.1 310.9 457.1 310.7 457.1 310.4 456.9 310.1 457.3 310.2 457.6 309.9 458.0M317.1 455.7 319.5 454.9 320.0 453.2 319.6 452.6 319.6 452.3 319.9 451.9 319.9 451.6 320.2 451.4 320.1 451.3 320.2 450.7 320.6 450.7M319.6 452.6 317.6 452.5 316.8 451.5 316.8 451.3M316.3 451.0 316.7 451.0M314.0 446.3 312.9 447.1M312.9 447.1 313.6 447.1 313.8 447.6 314.3 447.5" fill="none" stroke-width="1.05"/>
<path d="M356.5 452.8 356.9 453.5 357.2 454.2 358.2 454.2 358.5 455.0 358.0 455.2 357.8 455.5 358.7 456.0 359.4 457.0 359.9 457.7 360.4 458.3 360.7 458.8 360.5 459.7 359.8 459.3 359.4 459.9 358.8 459.6M360.5 459.7 360.7 460.2 360.6 461.2 359.3 461.7 359.6 462.3 358.8 462.3 358.1 462.6" fill="none" stroke-width="1.05"/>
<path d="M375.3 439.0 375.6 438.9 376.0 438.4 376.8 438.3 376.9 438.1" fill="none" stroke-width="1.05"/>
<path d="M334.1 437.3 332.6 437.4 331.6 437.1 330.8 436.5 331.7 436.8 332.0 436.4" fill="none" stroke-width="1.05"/>
<path d="M320.2 435.3 321.1 435.3 321.0 434.8 321.7 434.4 322.3 433.7 323.4 434.4 323.5 435.2 323.8 435.4 324.6 435.3 324.9 435.5 325.3 436.5 326.1 437.3 326.7 437.8 327.5 438.3 328.5 438.7 328.5 439.3" fill="none" stroke-width="1.05"/>
<path d="M269.3 434.7 269.3 433.9 269.0 433.5 270.1 432.8 271.1 432.9 272.1 432.9 273.0 433.1 273.6 433.0 274.9 433.1 275.2 433.5 276.6 433.9 276.9 433.7 277.8 434.3 278.7 434.0 278.7 434.7 278.0 435.4 277.0 435.6 276.9 435.9 276.5 436.5 276.1 437.4 276.5 438.0 276.0 438.4 275.8 439.1 275.3 439.3 274.7 439.9 273.7 439.9 272.9 439.9 272.5 440.3 272.1 440.7 271.8 440.6 271.5 440.2 271.3 439.8 270.5 439.6 270.5 439.3 270.7 438.9 270.9 438.6 270.6 438.3 270.8 437.7 270.5 437.1 270.8 437.0 270.9 436.4 271.0 436.3 271.0 435.5 271.4 435.2 271.1 434.7 270.7 434.7 270.6 434.8 270.1 434.8 269.9 434.3Z" fill="#799cff"/>
<path d="M165.9 393.9 169.4 395.5 172.2 394.1 176.1 393.0 178.4 394.1 181.6 393.5 184.7 395.2 186.3 397.4 190.2 397.6 191.8 396.1 194.1 396.3 197.2 398.0 199.6 397.8 201.2 396.7 202.5 394.6 200.9 392.8 200.9 389.9 202.3 388.2 203.5 389.9 204.0 393.7 205.5 394.1 205.5 396.3 207.4 396.1 207.2 397.6 208.8 397.6 209.4 393.5 211.7 393.7 212.7 394.8 212.6 395.9 212.2 397.2 212.7 398.2 211.1 400.6 209.2 400.4 209.0 401.4 208.2 402.9 208.0 403.6 206.6 405.1 205.3 405.8 203.7 408.4 202.6 410.4 202.3 413.5 203.4 413.6 204.1 416.1 205.2 415.8 206.6 416.4 208.0 417.7 209.8 418.7 211.9 418.9 212.0 421.4 212.6 422.8 213.8 424.0 214.4 423.7 214.8 422.3 214.4 420.3 213.9 419.5 215.1 418.9 216.4 417.0 216.4 416.0 215.8 414.7 214.9 413.6 215.8 411.9 215.4 410.5 215.2 408.0 215.7 407.5 217.1 408.0 218.6 407.9 220.2 409.4 220.4 410.0 221.8 410.0 222.1 413.0 222.8 413.6 223.4 414.5 224.5 413.6 225.3 411.9 225.8 411.3 226.4 412.7 228.3 416.4 228.0 417.3 229.0 418.0 231.5 419.6 231.7 420.7 232.7 421.4 232.7 422.9 232.2 423.3 230.3 424.2 229.4 425.3 225.8 425.2 224.4 425.3 223.7 426.1 222.7 426.6 220.7 429.3 221.3 429.1 222.6 427.6 224.2 426.6 225.4 426.5 226.1 427.1 225.4 427.8 225.6 429.1 225.8 430.0 226.9 430.6 228.2 430.3 229.0 429.1 229.4 429.9 229.5 430.3 228.6 431.0 226.8 431.7 226.1 432.1 225.1 433.0 224.6 432.9 224.5 431.9 225.9 431.0 224.7 431.0 223.8 431.2 223.3 430.6 223.3 429.0 222.9 428.6 222.2 428.6 221.5 429.4 221.3 430.3 220.4 431.0 220.4 431.3 217.7 431.3 216.2 432.9 214.3 433.0 214.5 433.6 213.5 434.2 211.8 434.9 211.3 434.5 211.8 433.5 212.1 432.9 211.7 431.0 210.9 430.4 211.0 430.2 210.5 429.6 209.9 429.5 207.1 427.6 206.2 427.9 205.2 427.6 203.8 427.3 202.5 427.1 202.3 426.7 201.8 426.3 201.8 426.7 180.0 426.7 180.2 426.7 178.5 425.5 176.6 424.5 176.1 423.4 176.2 422.7 175.2 422.0 175.1 421.0 174.1 420.0 174.1 419.4 174.5 418.7 174.5 417.8 173.2 416.9 171.9 414.2 170.6 412.9 169.4 413.0 168.6 413.5 167.5 411.8 165.9 411.3ZM179.6 427.3 177.9 427.0 175.8 424.9 176.6 424.7 178.1 425.5 179.3 426.6ZM232.8 423.9 232.4 424.7 232.9 425.7 234.5 426.5 234.2 427.3 234.8 427.1 234.9 427.7 235.2 428.5 234.8 429.4 233.9 429.3 233.9 428.2 233.0 429.2 232.3 428.4 229.9 428.4 230.6 426.6 231.4 424.7 232.0 423.9ZM227.9 399.6 226.7 403.5 225.5 402.5 224.1 406.7 225.5 407.4 224.4 408.0 222.5 408.0 220.8 407.0 219.8 406.2 217.8 404.4 215.5 404.7 214.9 404.0 215.3 402.7 216.8 402.7 218.4 402.3 219.4 398.8 216.9 396.7 215.1 393.5 214.1 393.2 212.7 393.7 209.9 393.0 206.9 392.1 206.3 391.1 207.0 390.2 205.9 390.2 205.7 387.7 206.3 385.3 209.2 383.4 209.9 384.8 211.9 383.7 213.2 386.4 213.2 387.9 214.6 387.2 215.4 386.4 217.1 387.7 218.2 388.7 218.3 389.9 219.8 389.2 220.6 390.9 222.5 391.8 223.2 392.8 223.9 394.8 222.5 395.9 224.4 397.2 225.5 397.8 226.7 399.6ZM191.8 386.6 191.6 388.9 192.0 387.9 193.8 386.4 194.5 390.6 197.2 393.0 197.2 393.9 195.9 394.1 196.4 395.0 196.1 395.7 194.1 395.2 193.2 394.8 191.1 395.9 187.6 396.3 187.1 395.2 186.1 394.6 184.9 394.8 184.5 393.0 186.7 391.6 188.3 392.1 184.0 391.8 183.6 390.9 185.4 389.9 182.8 389.2 184.0 386.4 186.1 384.8 186.9 385.3 188.3 385.6 189.4 387.2 190.3 385.6ZM179.9 383.7 178.4 388.4 179.5 389.9 182.0 389.7 183.0 386.9 185.5 385.3 184.2 382.2 182.3 382.2 181.2 381.7 178.5 382.0ZM227.8 349.2 223.3 354.2 225.1 354.2 223.1 357.3 220.6 362.4 219.0 363.3 216.1 364.6 217.2 365.0 216.7 365.8 217.3 367.8 216.6 369.0 213.9 372.7 215.3 373.4 213.2 376.1 211.2 375.1 208.9 375.8 206.3 375.1 206.2 373.7 207.6 372.7 207.2 370.1 207.7 369.8 209.8 371.6 209.5 369.8 207.5 368.2 208.1 365.8 209.2 364.6 209.1 362.0 210.4 360.2 209.3 358.7 208.6 355.8 205.9 353.1 205.8 350.9 208.3 349.8 209.4 347.4 211.8 346.1 214.2 344.8 216.7 344.2 219.3 344.2 222.7 344.8 224.8 345.5ZM204.4 355.3 206.6 358.7 207.6 363.3 206.8 367.8 203.9 367.5 201.6 364.2 200.7 361.1 202.3 357.3ZM185.3 371.3 185.3 373.7 183.9 375.1 181.2 377.1 180.1 376.4 181.4 373.7 183.1 371.6ZM195.3 365.0 198.0 367.1 198.3 370.1 197.0 369.8 195.8 368.6 194.0 368.2 193.8 364.6ZM200.5 366.7 201.5 368.2 201.3 369.8 200.1 370.1 199.5 369.4 199.1 367.8 199.1 366.2ZM213.9 380.2 213.3 381.1 212.1 381.7 207.3 381.7 204.0 380.5 203.7 378.7 203.6 377.1 202.8 375.8 201.2 375.4 200.3 374.1 200.6 372.7 202.2 373.0 204.6 374.1 206.0 376.7 206.5 378.0 208.7 378.3 209.9 377.7 211.5 377.4 212.8 377.7 213.6 379.0ZM203.4 386.1 202.5 388.2 201.6 387.9 201.2 385.8 201.2 384.5 201.6 383.1 202.3 382.5 204.0 382.5 205.5 383.1 204.3 385.6 203.4 386.1ZM197.7 383.4 198.7 383.9 200.1 383.4 200.3 384.2 199.5 385.6 200.8 386.6 200.6 388.9 199.3 389.9 198.6 389.7 198.0 388.9 196.1 386.9 196.1 386.1 197.7 386.4 196.9 384.5ZM193.7 377.1 193.1 379.9 190.4 380.2 188.5 381.7 187.3 381.7 187.1 380.8 188.8 379.3 185.3 379.9 184.2 379.3 185.3 376.1 186.0 375.1 188.2 376.4 189.6 378.3 190.9 378.3 189.8 375.4 190.5 374.1 191.4 374.4 191.6 376.1 191.9 377.4 192.6 376.7ZM202.0 378.0 202.7 379.0 202.6 381.1 201.5 380.8 200.5 380.2 200.9 378.7 202.0 378.0ZM199.2 374.4 199.8 375.8 199.8 377.7 199.4 379.9 198.2 380.2 197.3 379.6 197.3 378.0 196.1 378.0 196.0 375.8 198.0 374.8ZM209.6 402.0 209.8 402.9 210.2 402.5 210.6 403.1 211.5 403.6 212.4 404.2 212.4 405.1 213.1 404.9 213.6 405.6 212.9 406.2 211.7 405.6 211.3 404.9 210.5 405.8 209.4 406.7 209.1 405.8 208.1 406.0 208.7 405.1 208.8 403.6Z" fill="#5b81ec"/>
<path d="M239.7 348.0 242.4 344.2 245.1 344.2 246.1 342.1 248.9 341.4 255.1 342.1 260.1 347.4 258.6 349.8 255.6 349.8 251.4 350.3 251.8 351.5 254.5 350.9 256.9 352.6 258.4 350.9 259.1 353.1 258.2 355.8 260.2 354.2 264.0 352.0 266.4 353.1 266.8 355.3 263.6 358.7 263.1 360.2 260.7 360.6 262.5 361.1 261.6 364.2 260.9 366.7 260.9 371.3 261.9 373.4 260.7 373.7 259.4 374.8 260.9 376.4 261.0 379.3 260.2 379.3 261.2 382.0 259.5 382.2 260.4 383.4 260.1 384.2 259.0 384.8 257.9 384.8 258.9 386.6 258.9 387.7 257.3 386.6 256.9 387.4 258.0 387.9 259.1 389.4 259.3 391.4 258.0 391.8 257.3 390.9 256.4 389.7 256.6 391.1 255.7 392.5 257.8 392.5 258.9 392.8 256.8 394.6 254.7 396.3 252.3 397.2 251.5 397.2 250.7 398.0 249.6 400.0 247.9 401.4 247.4 401.6 246.3 402.0 245.2 402.3 244.5 403.6 244.5 404.9 244.1 406.0 242.8 407.4 243.2 408.7 242.8 410.0 242.4 411.6 241.3 411.8 240.1 410.4 238.5 410.4 237.8 409.5 237.3 407.9 236.0 405.8 235.6 404.6 235.4 402.9 234.3 401.2 234.6 399.8 234.1 399.0 234.9 396.5 236.0 395.9 236.3 395.0 236.5 393.2 235.6 393.9 235.2 394.4 234.5 394.6 233.5 393.9 233.4 392.3 233.8 391.1 234.5 391.1 236.1 391.6 234.8 390.2 234.1 389.4 233.3 389.7 232.7 388.9 233.5 386.6 233.1 385.6 232.4 383.9 231.5 380.8 230.5 379.6 230.5 378.3 228.4 376.4 226.7 376.1 224.6 376.4 222.7 376.4 221.8 375.4 220.4 373.4 222.5 372.3 224.0 372.0 220.8 371.3 218.9 369.8 219.0 368.2 222.0 366.2 224.9 364.2 225.2 362.4 223.1 361.1 223.7 359.2 226.5 355.8 227.6 355.3 227.3 352.6 229.1 351.5 231.6 350.3 234.0 350.3 234.9 352.0 236.9 349.2 238.8 350.9Z" fill="#5b81ec"/>
<path d="M180.2 426.7 201.8 426.7 201.8 426.3 202.3 426.7 202.5 427.1 203.8 427.3 205.2 427.6 206.2 427.9 207.1 427.6 209.9 429.5 210.5 429.6 211.0 430.2 210.9 430.4 211.7 431.0 212.1 432.9 211.8 433.5 211.3 434.5 211.8 434.9 213.5 434.2 214.5 433.6 214.3 433.0 216.2 432.9 217.7 431.3 220.4 431.3 220.4 431.0 221.3 430.3 221.5 429.4 222.2 428.6 222.9 428.6 223.3 429.0 223.3 430.6 223.8 431.2 223.9 431.6 222.3 432.4 221.5 432.8 221.1 433.4 220.9 434.3 221.5 434.8 220.7 435.1 219.3 435.4 218.6 435.7 219.8 435.5 220.0 435.7 218.5 436.0 218.2 437.0 217.7 437.8 217.2 437.2 217.5 438.3 216.9 439.5 216.6 437.6 216.6 438.8 216.8 439.8 217.1 441.0 216.5 441.8 215.7 442.1 215.2 442.6 214.4 443.0 213.5 443.9 212.7 445.0 212.5 445.6 212.7 446.2 213.3 447.6 213.6 449.0 213.6 450.0 213.4 450.5 212.8 450.5 212.4 449.9 211.6 448.5 211.4 447.1 210.5 446.2 209.7 446.6 208.7 445.9 207.1 445.9 206.2 446.1 206.3 447.0 205.7 447.1 204.6 446.5 203.4 446.4 202.2 446.7 201.5 447.4 200.3 448.2 200.1 449.2 200.3 449.9 200.0 450.0 198.8 449.4 198.4 448.5 198.0 447.9 197.3 446.8 196.7 446.4 196.1 446.4 195.6 447.1 194.5 446.6 194.1 445.7 192.9 444.6 191.6 444.6 191.6 445.1 189.4 445.1 186.4 443.9 184.6 443.9 184.5 443.5 183.6 442.8 183.5 442.5 182.0 442.2 181.9 442.0 181.0 440.4 180.4 439.1 179.5 437.7 178.9 436.3 179.1 435.5 179.1 434.6 178.8 433.7 179.2 431.8 179.3 430.2 179.1 429.2 178.7 427.7 179.9 427.9 180.3 429.0 180.6 428.6ZM165.9 393.9 165.9 411.3 167.5 411.8 168.6 413.5 170.6 412.9 171.9 414.2 173.2 416.9 174.5 417.8 174.5 418.7 173.7 418.8 172.7 417.1 171.8 416.0 171.3 414.7 169.4 414.5 168.4 414.1 166.8 412.6 164.7 411.6 163.6 411.8 161.1 410.4 160.3 410.7 160.4 411.8 159.1 412.2 157.5 413.0 157.4 412.2 157.8 410.7 158.6 410.2 158.4 409.7 157.4 410.7 156.8 411.6 155.7 412.7 156.3 413.5 155.6 414.7 153.9 415.7 152.5 417.0 151.3 418.3 150.1 418.5 148.6 419.5 147.3 419.9 147.2 419.6 148.7 418.7 149.6 417.8 150.9 417.1 152.0 416.3 152.8 415.4 152.9 414.4 153.4 413.5 152.4 413.9 151.7 414.2 150.7 413.2 149.5 413.8 149.4 412.9 149.5 412.4 148.0 412.1 146.9 411.0 146.8 410.0 146.2 409.4 147.2 407.5 147.4 406.7 148.6 406.7 149.8 406.0 150.4 405.4 149.8 404.4 150.4 403.6 149.1 404.0 148.3 404.0 147.1 404.4 146.0 403.8 144.7 402.0 145.8 401.2 147.5 400.2 148.1 400.2 148.0 401.2 149.7 401.2 149.1 400.0 148.1 399.2 146.8 397.4 145.7 396.5 146.2 395.5 147.6 395.5 148.5 394.4 149.5 392.3 151.8 390.9 153.7 389.7 155.5 391.4 157.1 391.1 158.3 392.1 160.7 392.5 162.9 393.0 163.9 392.5ZM154.5 455.7 155.1 455.3 154.2 454.7 154.2 455.2Z" fill="#5b81ec"/>
<path d="M225.5 488.7 225.9 489.3 226.2 488.6 227.2 488.6 227.3 488.7 228.7 490.2 229.4 490.3 230.3 491.0 231.1 491.3 231.3 491.7 230.5 493.0 231.3 493.2 232.1 493.3 232.7 493.2 233.4 492.5 233.6 491.7 234.0 491.6 234.4 492.1 234.4 492.8 233.1 493.7 232.3 494.6 231.3 495.7 231.0 496.5 230.9 497.4 230.9 498.3 230.7 498.6 230.5 499.6 231.6 500.5 231.4 501.1 232.0 501.6 231.9 502.0 231.2 503.3 230.0 503.8 228.4 504.0 227.6 503.9 227.7 504.5 227.6 505.4 227.7 505.9 227.3 506.2 226.4 506.4 225.7 506.0 225.4 506.3 225.5 507.3 226.0 507.6 226.4 507.2 226.6 507.9 225.9 508.2 225.3 508.8 225.2 509.9 225.0 510.5 224.3 510.5 223.7 511.1 223.4 511.9 224.2 512.7 225.0 513.0 224.7 514.0 223.7 514.7 223.3 516.1 222.6 516.6 222.2 517.1 222.5 518.5 223.0 519.1 222.6 519.1 221.9 518.9 220.0 518.8 219.7 518.0 219.7 517.1 219.2 517.1 218.9 516.8 218.9 515.4 219.5 514.9 219.7 514.1 219.7 513.5 220.0 512.6 220.3 511.1 220.2 510.4 220.6 510.2 220.5 509.8 220.1 509.6 220.4 509.1 220.0 508.7 219.9 507.5 220.2 507.3 220.0 506.0 220.2 504.9 220.4 504.0 220.9 503.7 220.7 502.7 220.7 501.9 221.2 501.2 221.2 500.4 221.7 499.4 221.7 498.6 221.5 498.4 221.1 496.8 221.6 495.8 221.5 495.0 221.8 494.2 222.3 493.3 222.9 492.8 222.6 492.4 222.8 492.2 222.8 490.7 223.7 490.3 223.9 489.4 223.8 489.2 224.4 488.4ZM222.6 519.5 222.9 520.2 223.3 521.2 224.3 522.0 225.4 522.3 225.1 523.0 224.3 523.1 223.9 522.6 223.4 522.5 222.6 522.5Z" fill="#5b81ec"/>
<path d="M231.3 495.7 232.3 494.6 233.1 493.7 234.4 492.8 234.4 492.1 234.0 491.6 233.6 491.7 233.8 490.8 233.8 490.3 233.0 490.3 232.8 489.2 232.1 488.7 231.0 488.7 231.0 487.5 230.8 487.1 231.0 486.9 231.2 486.1 231.3 485.4 230.7 484.7 230.6 484.3 230.8 483.8 229.2 483.8 229.0 482.9 229.1 482.9 229.0 481.8 228.5 481.6 228.0 481.6 227.2 481.2 226.9 480.9 226.0 480.8 225.1 480.1 225.2 479.5 225.1 478.6 224.2 478.7 223.1 479.3 222.9 479.6 221.9 479.5 221.1 479.6 221.1 478.4 219.8 478.9 219.5 478.4 219.0 478.4 219.2 478.0 218.7 477.5 218.4 476.8 218.6 476.6 218.6 476.3 219.1 476.1 219.0 475.7 219.2 475.4 219.3 475.1 220.2 474.5 220.8 474.4 220.9 474.3 221.6 474.3 222.0 472.2 222.0 471.8 221.8 471.3 221.5 471.1 221.5 470.5 221.9 470.4 222.1 470.4 222.2 470.1 221.7 470.0 221.7 469.6 223.2 469.6 223.5 469.3 223.7 469.6 223.8 470.0 224.0 469.9 224.4 470.4 225.1 470.3 225.1 470.0 225.8 469.9 226.1 469.7 226.2 469.4 226.7 469.2 226.7 469.0 226.0 468.9 225.9 468.5 225.9 467.9 225.6 467.7 225.8 467.7 226.3 467.8 226.9 467.9 227.2 467.8 227.7 467.6 228.6 467.4 228.9 467.1 228.8 466.8 229.2 466.8 229.4 467.0 229.3 467.3 229.5 467.4 229.8 467.8 229.5 468.1 229.4 468.7 229.6 469.2 229.7 469.5 230.2 469.9 230.5 469.9 230.6 469.7 230.9 469.7 231.2 469.6 231.5 469.4 231.9 469.4 232.1 469.4 232.5 469.5 232.6 469.3 232.4 469.2 232.5 468.9 232.8 469.0 233.2 468.9 233.7 469.1 234.0 469.3 234.2 469.0 234.4 469.1 234.9 469.3 235.2 468.9 235.5 468.4 235.9 467.6 236.2 467.6 236.3 468.0 236.8 469.4 237.2 469.6 237.2 470.1 236.7 470.7 236.9 471.0 238.3 471.1 238.3 471.8 238.9 471.4 239.9 471.6 241.2 472.2 241.6 472.5 241.4 473.0 242.4 472.8 243.9 473.2 245.1 473.2 246.2 473.8 247.2 474.7 247.8 474.9 248.5 474.9 248.8 475.2 249.0 476.2 249.2 476.6 248.9 478.0 248.5 478.5 247.4 479.6 246.8 480.5 246.3 481.2 246.1 481.3 245.9 481.8 245.9 483.4 245.7 484.6 245.6 485.2 245.4 485.5 245.2 486.6 244.4 487.7 244.3 488.5 243.6 488.9 243.5 489.4 242.6 489.4 241.4 489.8 240.8 490.1 239.9 490.4 239.1 491.1 238.4 491.9 238.3 492.5 238.4 493.1 238.2 493.9 238.1 494.4 237.5 494.8 236.7 496.5 236.0 497.2 235.4 497.6 235.1 498.5 234.5 499.1 234.4 498.5 234.7 498.0 234.2 497.4 233.6 496.9 232.8 496.4 232.5 496.4 231.7 495.6Z" fill="#5b81ec"/>
<path d="M289.7 427.8 289.6 428.3 289.2 428.3 289.3 428.5 289.1 429.2 288.9 429.4 288.2 429.4 287.8 429.8 287.2 429.6 286.1 429.3 285.9 429.0 285.2 429.2 285.0 429.3 284.5 429.2 283.8 429.0 283.9 428.7 283.9 428.5 284.1 428.4 284.5 428.7 284.6 428.4 285.3 428.5 285.9 428.3 286.3 428.3 286.6 428.4 286.5 427.6 286.7 427.4 287.0 426.9 287.6 427.2 288.1 426.8 288.4 426.7 288.9 427.1 289.3 427.0 289.7 427.2Z" fill="#5b81ec"/>
<path d="M279.0 423.9 279.5 423.9 280.3 423.7 280.8 424.3 281.2 424.5 281.1 425.4 280.9 425.4 280.8 426.1 280.1 425.5 279.7 425.7 279.2 425.0 278.8 424.5 278.5 424.5 278.3 424.2Z" fill="#5b81ec"/>
<path d="M294.2 432.2 294.3 432.7 294.6 432.5 295.3 432.8 296.4 432.8 296.8 432.5 297.7 432.2 298.3 432.7 298.8 432.8 298.3 433.2 298.1 433.9 298.3 434.6 297.6 434.5 296.8 434.8 296.8 435.3 296.1 435.4 295.6 435.0 294.9 435.3 294.4 435.3 294.3 434.6 293.9 434.3 294.1 433.6 294.4 433.3 294.0 432.9 293.9 432.4Z" fill="#5b81ec"/>
<path d="M289.7 427.2 289.3 427.0 288.9 427.1 288.4 426.7 288.1 426.8 287.6 427.2 287.0 426.9 286.6 426.4 286.2 426.1 286.1 425.6 285.9 425.2 286.5 424.9 286.8 424.7 287.4 424.4 287.6 424.2 287.8 424.3 288.1 424.2 288.5 424.5 289.1 424.7 289.1 425.0 289.5 425.3 289.6 424.9 290.2 425.0 290.2 425.5 290.8 425.5 291.2 426.1 291.0 426.1 290.6 426.4 290.6 426.7 290.4 426.7 290.1 427.0 289.8 427.0Z" fill="#5b81ec"/>
<path d="M295.4 415.1 295.5 414.2 295.3 414.4 294.7 413.9 294.6 413.0 295.7 412.6 296.7 412.4 297.5 412.7 298.3 412.6 298.4 412.9 297.8 413.8 298.1 415.1 297.8 415.6 297.1 415.6 296.4 415.1 296.1 414.9Z" fill="#5b81ec"/>
<path d="M298.8 395.0 298.6 396.5 299.9 398.0 299.2 399.6 300.0 401.8 299.5 403.5 300.2 404.7 299.9 405.8 301.1 407.0 300.7 407.9 300.0 408.9 298.4 411.0 297.0 411.1 295.6 411.6 294.3 412.1 293.9 411.1 293.1 410.7 293.2 409.0 292.9 407.5 293.2 406.5 293.9 405.4 295.7 403.5 296.3 403.1 296.2 402.3 295.1 401.4 294.9 400.6 294.8 397.6 293.6 396.1 292.5 395.0 293.0 394.4 293.9 395.7 294.8 395.5 295.7 396.1 296.5 395.0 296.9 393.5 298.1 392.5 299.1 393.5Z" fill="#5b81ec"/>
<path d="M272.8 427.1 273.8 426.9 275.1 427.2 274.9 425.8 275.6 426.4 277.4 425.4 277.6 424.4 278.3 424.2 278.5 424.5 278.8 424.5 279.2 425.0 279.7 425.7 280.1 425.5 280.8 426.1 281.0 426.3 281.2 426.1 281.6 426.5 282.7 426.7 282.3 427.6 282.3 428.4 282.0 428.6 281.6 428.5 281.7 428.7 281.1 429.4 281.1 429.9 281.5 429.8 281.7 430.2 281.7 430.6 281.9 431.0 281.6 431.3 281.9 432.1 282.3 432.3 282.2 432.8 281.5 433.4 280.0 433.1 278.8 433.4 278.7 434.0 277.8 434.3 276.9 433.7 276.6 433.9 275.2 433.5 274.9 433.1 275.3 432.4 275.4 430.2 274.7 429.0 274.1 428.4 272.9 428.0ZM283.9 434.4 283.6 435.2 283.3 435.0 283.0 434.3 283.2 433.9 283.7 433.5Z" fill="#5b81ec"/>
<path d="M271.5 420.6 271.7 421.5 271.1 422.7 269.6 423.4 268.6 423.3 269.2 421.9 268.8 420.6 269.9 419.5 270.4 418.9 270.6 419.6 270.4 420.3 270.9 420.3Z" fill="#5b81ec"/>
<path d="M281.2 421.1 281.8 421.1 281.9 421.6 281.7 422.8 281.6 423.2 281.1 423.2 281.2 424.5 280.8 424.3 280.3 423.7 279.5 423.9 279.0 423.9 279.4 423.5 280.1 421.6Z" fill="#5b81ec"/>
<path d="M287.4 420.7 287.7 421.5 287.4 421.8 287.7 422.3 287.9 422.9 287.8 423.4 288.1 424.2 287.8 424.3 288.1 424.2 288.5 424.5 289.1 424.7 289.1 425.0 289.5 425.3 289.6 424.9 290.2 425.0 290.2 425.5 290.8 425.5 291.2 426.1 291.2 426.3 291.5 426.0 291.9 426.5 292.4 426.3 292.8 426.4 293.3 426.1 294.1 426.6 294.2 426.7 294.0 426.1 294.7 425.2 295.1 425.0 295.2 424.7 294.8 423.5 294.8 423.0 294.6 422.4 295.0 422.1 295.0 421.6 294.8 421.1 294.8 420.6 294.6 420.2 294.2 420.0 291.8 419.9 291.0 419.9 291.0 419.5 290.2 419.3 289.2 419.8 288.0 420.3Z" fill="#5b81ec"/>
<path d="M269.3 434.7 269.9 434.3 270.1 434.8 270.6 434.8 270.7 434.7 271.1 434.7 271.4 435.2 271.0 435.5 271.0 436.3 270.9 436.4 270.8 437.0 270.5 437.1 270.8 437.7 270.6 438.3 270.9 438.6 270.7 438.9 270.5 439.3 270.5 439.6 270.2 439.9 269.8 439.7 269.4 439.8 269.6 439.0 269.5 438.4 269.1 438.3 268.9 438.0 269.0 437.3 269.3 436.9 269.3 436.4 269.5 435.8 269.5 435.4Z" fill="#5b81ec"/>
<path d="M287.1 430.8 287.2 429.6 289.3 429.5 289.2 430.4 288.4 430.9Z" fill="#5b81ec"/>
<path d="M269.6 448.3 269.6 448.6 272.5 450.7 275.2 452.6 277.8 454.4 278.0 454.8 278.5 455.0 278.8 455.2 278.9 455.7 279.7 455.6 280.8 455.2 283.1 453.6 285.8 452.0 285.4 451.4 284.8 451.0 284.5 451.2 284.2 450.7 284.1 450.3 283.7 449.7 284.0 449.3 283.9 448.8 284.0 448.3 284.0 447.9 284.1 447.2 284.1 446.8 283.8 446.0 283.5 444.3 283.0 443.9 283.0 443.7 282.3 443.2 282.3 442.4 282.8 441.9 282.9 441.1 282.8 440.2 283.0 439.7 282.1 439.5 281.3 439.5 280.5 439.9 278.9 439.9 277.5 440.0 276.3 440.7 275.4 440.9 274.7 441.4 275.0 442.0 275.0 442.6 275.3 443.6 275.5 443.8 275.4 444.2 274.3 444.3 274.0 444.7 273.5 444.7 273.5 445.4 272.6 445.8 272.3 446.2 271.6 446.5 270.8 446.6 269.6 447.3Z" fill="#5b81ec"/>
<path d="M263.0 454.1 263.1 453.7 263.6 452.6 263.6 452.4 263.9 451.8 264.3 451.2 264.5 451.1 264.8 450.6 264.8 450.1 265.1 449.5 265.6 449.3 266.1 448.4 266.5 448.0 267.2 447.9 267.8 447.3 268.2 447.1 268.9 446.3 268.7 445.1 269.0 444.4 269.1 443.9 269.6 443.3 270.3 442.8 271.0 442.4 271.5 441.5 271.8 440.8 272.3 440.9 272.8 441.3 273.6 441.2 274.3 441.4 274.7 441.4 275.0 442.0 275.0 442.6 275.3 443.6 275.5 443.8 275.4 444.2 274.3 444.3 274.0 444.7 273.5 444.7 273.5 445.4 272.6 445.8 272.3 446.2 271.6 446.5 270.8 446.6 269.6 447.3 269.6 448.3 269.6 448.6 269.6 449.9 267.0 449.9 267.0 452.1 266.3 452.1 266.1 452.6 266.2 453.8 263.2 453.8Z" fill="#5b81ec"/>
<path d="M344.9 426.5 345.2 426.4 345.3 427.2 346.0 427.8 347.1 428.3 347.7 429.2 347.4 430.6 347.6 431.0 349.6 431.4 350.6 432.0 351.0 432.2 351.4 433.2 351.8 433.8 352.8 433.8 354.3 434.0 355.4 433.8 356.1 434.0 357.3 434.7 358.3 434.7 358.6 435.0 359.5 434.5 360.8 434.0 361.9 434.0 362.9 433.6 363.4 433.1 364.0 432.8 364.1 432.8 364.1 431.2 365.3 431.6 366.1 431.0 367.3 430.6 367.8 429.8 368.4 429.4 369.5 429.3 370.2 429.4 370.2 429.1 369.5 428.3 368.9 427.8 368.3 428.3 367.5 428.0 367.0 428.3 366.9 427.8 367.4 426.6 367.8 425.7 368.8 426.1 369.9 425.4 369.9 424.8 370.6 423.5 370.9 423.1 370.9 422.4 370.6 422.0 371.2 421.4 372.1 421.2 373.2 421.1 374.4 421.5 375.0 422.0 375.6 423.3 375.8 423.8 376.1 424.7 376.4 425.8 377.8 426.3 378.7 427.1 379.0 428.2 380.9 427.7 382.2 427.3 381.8 428.4 381.4 428.8 381.2 430.1 380.7 431.2 379.7 431.0 379.0 431.4 379.3 432.3 379.1 433.6 378.7 433.6 378.7 434.2 378.2 433.5 377.9 434.2 376.7 434.6 376.8 435.1 376.1 435.1 375.8 434.8 375.3 435.5 374.4 436.0 373.8 436.8 372.7 437.1 372.0 437.5 371.3 437.8 371.7 437.3 371.5 436.9 372.1 436.2 371.7 435.7 371.0 436.0 370.1 436.8 369.6 437.4 368.8 437.5 368.4 438.0 368.9 438.6 369.5 438.8 369.5 439.3 370.2 439.5 371.0 438.8 371.7 439.2 372.3 439.2 372.4 439.8 371.3 439.9 370.9 440.5 370.2 441.0 369.8 441.7 370.6 442.2 370.9 443.1 371.3 443.9 371.9 444.7 371.9 445.4 371.4 445.6 371.6 446.2 372.0 446.4 371.9 447.1 371.7 447.9 371.3 447.9 370.7 448.8 370.1 450.1 369.4 451.1 368.3 451.9 367.2 452.5 366.3 452.6 365.9 453.1 365.5 452.8 365.1 453.1 364.0 453.6 363.2 453.7 362.9 454.7 362.5 454.7 362.3 454.1 362.5 453.7 361.4 453.5 361.1 453.6 360.2 453.4 359.9 453.1 360.0 452.5 359.3 452.4 358.9 452.0 358.3 452.5 357.5 452.6 356.8 452.6 356.5 452.8 356.1 453.0 356.1 453.9 355.7 453.9 355.7 453.7 355.7 453.4 355.0 453.6 354.7 453.5 354.1 453.1 354.3 452.5 353.9 452.3 353.7 451.4 352.8 451.6 352.9 450.6 353.7 449.9 353.7 449.2 353.7 448.5 353.3 448.3 353.1 447.8 352.6 447.8 351.8 447.7 352.1 447.3 351.7 446.7 351.1 447.1 350.5 446.9 349.6 447.5 348.9 448.1 348.2 448.2 347.9 448.0 347.4 447.9 346.9 447.8 346.5 448.0 346.0 448.7 345.9 447.9 345.4 448.1 344.5 448.1 343.6 447.9 343.0 447.5 342.4 447.3 342.1 446.9 341.6 446.7 340.9 446.2 340.2 445.9 339.9 446.1 338.8 445.4 338.0 444.9 337.9 443.9 338.4 443.9 338.4 443.5 338.1 443.0 338.2 442.3 337.3 441.1 336.1 440.7 335.8 439.9 335.3 439.6 335.1 439.3 335.0 438.7 335.1 438.3 334.6 438.1 334.3 438.2 334.1 437.3 334.3 437.0 334.2 436.8 335.0 436.2 335.5 436.0 336.3 436.2 336.6 435.5 337.6 435.4 337.9 435.0 339.1 434.5 339.3 434.3 339.2 433.6 339.8 433.3 339.1 431.4 340.5 431.0 341.0 430.8 341.6 428.7 343.1 429.1 343.5 428.5 343.6 427.3 344.2 427.3ZM362.8 456.0 362.2 456.4 361.5 456.1 361.5 455.4 361.9 455.1 362.7 454.8 363.2 454.8 363.3 455.2Z" fill="#5b81ec"/>
<path d="M337.3 441.1 338.2 442.3 338.1 443.0 338.4 443.5 338.4 443.9 337.9 443.9 338.0 444.9 338.8 445.4 339.9 446.1 339.5 446.5 339.1 447.3 339.9 447.7 340.6 448.1 341.6 448.6 342.7 448.7 343.2 449.2 343.8 449.3 344.7 449.4 345.4 449.4 345.5 449.1 345.3 448.6 345.4 448.1 345.9 447.9 346.0 448.7 346.0 448.8 346.7 449.2 347.2 449.0 347.8 449.1 348.5 449.1 348.5 448.5 348.2 448.2 348.9 448.1 349.6 447.5 350.5 446.9 351.1 447.1 351.7 446.7 352.1 447.3 351.8 447.7 352.6 447.8 352.7 448.1 352.4 448.3 352.5 448.8 351.9 448.7 350.9 449.3 351.0 449.8 350.5 450.5 350.5 450.9 350.1 451.6 349.5 451.4 349.5 452.4 349.3 452.6 349.4 453.0 349.0 453.2 348.5 451.9 348.4 451.9 348.2 452.4 347.8 451.9 348.1 451.4 348.4 451.4 348.8 450.7 348.3 450.6 347.6 450.6 346.8 450.4 346.7 449.8 346.4 449.8 345.8 449.4 345.5 450.0 346.0 450.5 345.6 450.7 345.4 451.1 345.9 451.3 345.7 451.9 346.0 452.5 346.1 453.1 346.0 453.5 345.5 453.5 344.5 453.6 344.5 454.3 344.2 454.7 343.1 455.3 342.1 456.3 341.6 456.8 340.8 457.4 340.8 457.7 340.4 458.0 339.7 458.2 339.3 458.3 339.1 458.9 339.2 460.0 339.3 460.6 339.0 461.3 339.0 462.7 338.5 462.8 338.2 463.4 338.4 463.7 337.7 463.9 337.4 464.4 337.1 464.6 336.4 463.9 336.0 462.8 335.7 462.0 335.5 461.6 335.1 460.9 334.8 459.8 334.7 459.3 334.0 458.2 333.7 456.6 333.4 455.6 333.4 454.6 333.3 453.7 332.2 454.2 331.6 454.1 330.6 453.1 330.9 452.8 330.7 452.5 329.8 451.8 330.3 451.2 332.0 451.2 331.9 450.5 331.5 450.1 331.4 449.4 330.8 449.0 331.7 448.0 332.6 448.1 333.4 447.2 334.0 446.3 334.7 445.3 334.7 444.7 335.4 444.1 334.8 443.7 334.4 443.1 334.1 442.3 334.5 441.9 335.8 442.1 336.6 441.9Z" fill="#5b81ec"/>
<path d="M345.2 426.4 346.0 426.1 347.4 425.2 348.6 424.5 349.3 424.9 350.1 424.9 350.7 425.5 351.4 425.6 352.6 425.9 353.3 425.0 353.0 424.3 353.9 423.0 354.7 423.5 355.4 423.7 356.4 423.9 356.5 424.9 357.6 425.4 358.3 425.2 359.4 425.0 360.1 425.2 360.9 425.8 361.4 426.4 362.1 426.4 363.1 426.6 363.8 426.3 364.8 426.1 366.0 425.3 366.5 425.4 366.9 425.8 367.8 425.7 367.4 426.6 366.9 427.8 367.0 428.3 367.5 428.0 368.3 428.3 368.9 427.8 369.5 428.3 370.2 429.1 370.2 429.4 369.5 429.3 368.4 429.4 367.8 429.8 367.3 430.6 366.1 431.0 365.3 431.6 364.1 431.2 364.1 432.8 364.0 432.8 363.4 433.1 362.9 433.6 361.9 434.0 360.8 434.0 359.5 434.5 358.6 435.0 358.3 434.7 357.3 434.7 356.1 434.0 355.4 433.8 354.3 434.0 352.8 433.8 351.8 433.8 351.4 433.2 351.0 432.2 350.6 432.0 349.6 431.4 347.6 431.0 347.4 430.6 347.7 429.2 347.1 428.3 346.0 427.8 345.3 427.2Z" fill="#5b81ec"/>
<path d="M388.9 481.8 389.1 482.4 389.7 482.1 390.3 482.8 390.2 483.1 390.4 483.8 390.9 485.1 390.8 485.5 391.1 486.1 391.9 486.5 393.0 487.2 393.4 488.0 393.7 488.8 394.3 489.1 394.5 488.9 394.6 489.9 395.6 490.7 396.2 491.4 396.3 492.1 396.4 492.5 396.3 493.1 396.7 493.9 396.6 494.7 396.3 495.9 396.3 496.4 396.2 497.0 395.9 497.9 395.2 498.3 394.9 499.1 394.7 499.5 394.5 500.4 394.1 500.9 394.0 501.6 393.8 502.2 393.9 502.5 393.4 502.9 392.6 502.9 391.9 503.3 391.5 503.7 391.0 504.1 390.4 503.7 389.9 503.5 390.0 503.0 389.6 503.2 388.9 503.9 388.2 503.6 387.8 503.5 387.3 503.4 386.5 503.1 386.1 502.5 385.9 501.8 385.8 501.2 385.4 500.9 384.6 500.8 384.8 500.3 384.7 499.6 384.3 500.3 383.6 500.5 384.0 499.9 384.1 499.4 384.4 498.9 384.3 498.2 383.7 499.1 383.2 499.4 382.9 500.1 382.3 499.7 382.3 499.2 381.8 498.5 381.4 498.1 381.6 497.9 380.6 497.4 380.0 497.4 379.3 496.9 377.8 497.0 376.8 497.3 376.0 497.7 375.2 497.6 374.4 498.0 373.7 498.3 373.5 498.8 373.3 499.2 372.6 499.2 372.1 499.3 371.4 499.1 370.9 499.2 370.3 499.2 369.9 499.7 369.6 499.7 368.8 500.3 367.7 500.2 367.0 499.6 366.5 499.4 366.5 498.9 366.9 498.8 367.0 498.6 367.0 498.2 367.1 497.6 367.0 497.0 366.6 496.1 366.5 495.6 366.5 495.1 366.2 494.5 366.2 494.2 365.9 493.9 365.7 493.1 365.3 492.4 365.2 492.1 365.5 492.4 365.2 491.7 365.6 491.9 365.9 492.3 365.9 491.8 365.5 491.1 365.4 490.9 365.2 490.6 365.3 490.1 365.5 489.9 365.5 489.0 365.5 489.0 365.8 488.4 365.9 489.0 366.2 488.4 366.9 488.2 367.2 487.8 367.8 487.5 368.2 487.4 368.4 487.5 369.0 487.2 369.5 487.1 369.6 486.9 369.9 486.9 370.2 486.9 371.1 486.6 371.5 486.2 371.7 485.8 372.1 485.4 372.2 484.7 372.8 483.9 373.1 484.7 373.5 484.5 373.1 484.1 373.4 483.7 373.8 483.8 373.8 483.3 374.2 482.9 374.5 482.5 374.9 482.4 374.9 482.1 375.2 482.2 375.2 482.1 376.0 481.8 376.5 482.2 377.0 482.7 377.5 482.7 377.9 482.8 377.8 482.3 378.2 481.7 378.5 481.5 378.4 481.3 378.7 480.8 379.2 480.5 379.6 480.6 380.3 480.5 380.3 480.1 379.6 479.8 380.1 479.7 380.6 479.9 381.1 480.2 381.7 480.4 381.9 480.3 382.4 480.5 382.9 480.4 383.2 480.4 383.3 480.3 383.7 480.7 383.5 481.1 383.2 481.4 382.9 481.4 383.0 481.7 382.8 482.1 382.5 482.5 382.5 482.8 383.2 483.3 383.8 483.5 384.2 483.8 384.7 484.3 385.0 484.3 385.4 484.5 385.5 484.7 386.2 485.0 386.8 484.7 386.9 484.3 387.1 483.9 387.2 483.4 387.4 482.8 387.3 482.5 387.3 482.2 387.2 481.7 387.4 481.1 387.5 480.9 387.4 480.7 387.6 480.3 387.7 479.8 387.7 479.6 388.0 479.3 388.3 479.7 388.3 480.2 388.5 480.3 388.6 480.6 388.8 481.0ZM390.3 506.0 391.1 506.3 391.5 506.2 392.1 506.0 392.6 506.1 392.7 507.3 392.3 507.6 392.3 508.5 392.0 508.2 391.5 508.9 391.3 508.9 390.8 508.8 390.3 508.0 390.2 507.2 389.8 506.4 389.8 505.9Z" fill="#5b81ec"/>
<path d="M272.5 418.4 274.8 420.2 276.5 422.0 276.9 423.5 275.2 424.4 272.5 424.5 272.8 422.5 272.7 420.4ZM271.9 419.6 271.5 420.6 270.9 420.3 270.4 420.3 270.6 419.6 270.4 418.9 271.1 418.8Z" fill="#3d66da"/>
<path d="M312.8 427.4 313.2 426.5 313.0 426.3 313.6 424.9 314.5 425.7 314.5 424.8 316.2 423.4 317.4 423.4 319.1 424.3 320.0 424.8 320.9 424.3 322.1 424.2 323.1 424.9 323.3 424.5 324.4 424.5 324.6 423.9 323.4 423.1 324.1 422.5 323.9 422.1 324.7 421.8 324.2 420.8 324.5 420.4 327.5 419.9 327.9 419.6 329.8 419.1 330.5 418.5 331.9 418.8 332.2 420.3 332.9 419.9 334.0 420.4 333.9 421.1 334.7 421.1 336.6 419.8 336.3 420.2 337.3 421.2 339.1 424.4 339.5 423.8 340.5 424.5 341.7 424.2 342.1 424.4 342.5 425.2 343.1 425.4 343.4 425.9 344.4 425.8 344.9 426.5 344.2 427.3 343.6 427.3 343.5 428.5 343.1 429.1 341.6 428.7 341.0 430.8 340.5 431.0 339.1 431.4 339.8 433.3 339.2 433.6 339.3 434.3 338.7 434.0 338.4 433.6 337.3 433.6 335.9 433.5 335.6 433.6 334.5 433.2 334.0 433.4 334.0 434.0 332.6 433.7 332.2 433.8 332.0 434.3 331.5 434.5 330.5 435.2 330.1 435.9 329.9 435.9 329.7 435.5 328.6 435.4 328.5 434.6 328.1 434.6 328.2 433.5 327.2 432.8 325.9 432.8 325.0 433.0 324.3 432.0 322.2 430.7 320.2 431.3 320.2 435.3 319.9 435.3 319.3 434.6 318.8 434.3 317.8 434.5 317.5 434.8 317.4 434.6 317.7 434.2 317.5 433.7 316.6 433.4 316.3 432.4 315.8 432.1 315.8 431.8 316.6 431.9 316.6 431.1 317.3 430.9 317.9 431.0 318.1 430.0 317.9 429.2 317.1 429.3 316.5 429.1 315.6 429.5 314.8 429.8 314.5 429.5 314.5 429.0 314.1 428.3 313.4 428.3Z" fill="#3d66da"/>
<path d="M300.6 393.5 301.5 393.2 302.9 394.6 305.0 395.0 308.0 397.6 308.6 398.4 308.6 399.8 307.7 400.8 306.5 401.4 302.9 399.8 302.4 400.2 303.6 401.6 303.7 404.4 305.4 405.4 305.4 404.6 305.0 403.6 305.5 403.1 307.4 404.2 308.0 403.6 307.6 402.3 309.4 400.4 310.1 400.6 310.8 401.2 311.2 399.8 310.6 398.6 311.0 397.4 310.5 396.1 312.7 396.7 313.0 398.0 312.1 398.2 312.1 399.4 312.7 400.0 313.9 399.6 314.1 398.4 315.7 397.4 318.5 395.5 319.1 395.7 318.3 397.0 319.2 397.2 319.8 396.5 321.3 396.3 322.4 395.5 323.3 396.7 324.3 395.5 323.4 394.1 323.9 393.2 326.1 394.1 327.2 394.8 330.0 397.2 330.6 396.1 329.8 395.0 329.7 394.4 328.8 394.1 329.1 393.2 328.6 391.4 328.6 390.6 330.0 388.4 330.6 386.1 331.1 385.6 333.3 386.1 333.4 387.7 332.6 389.7 333.2 390.4 333.4 392.1 333.3 395.2 334.1 396.5 333.7 398.0 332.2 400.8 333.1 401.0 333.4 400.4 334.3 399.8 334.5 398.8 335.2 397.8 334.8 396.7 335.1 395.2 334.2 395.0 334.0 393.9 334.7 391.6 333.7 389.7 335.1 387.9 334.9 386.1 335.3 385.8 335.7 387.4 335.4 389.9 336.2 390.2 335.8 388.4 337.2 387.4 338.8 387.4 340.2 388.7 339.5 386.6 339.5 383.9 340.9 383.1 342.7 383.4 344.4 383.1 343.8 381.4 344.7 379.6 345.6 379.6 347.1 378.0 349.2 377.4 349.4 376.7 351.5 376.4 352.1 377.1 353.9 375.4 355.4 375.4 355.5 373.7 356.3 372.3 358.2 370.9 359.5 372.0 358.4 373.0 360.2 373.5 360.4 375.1 361.2 374.4 363.4 374.4 365.2 376.1 365.8 377.4 365.6 379.0 364.8 379.9 362.7 381.4 362.1 382.2 363.0 382.8 364.2 383.4 364.9 382.8 365.3 384.8 365.7 383.9 367.0 383.4 369.5 383.9 369.6 385.3 372.9 385.6 373.0 383.7 374.6 383.9 375.9 383.9 377.1 385.6 377.5 387.2 377.1 388.2 378.0 390.2 379.3 391.1 380.0 388.7 381.3 389.7 382.6 388.9 384.1 389.9 384.7 389.2 386.0 389.4 385.4 387.2 386.5 386.1 393.5 387.7 394.2 389.2 396.2 391.1 399.4 390.6 401.0 390.9 401.6 391.8 401.5 393.7 402.4 394.4 403.5 393.9 405.0 393.7 406.4 394.1 407.9 393.9 409.3 395.9 410.2 395.2 409.6 393.7 410.0 392.8 412.4 393.5 414.0 393.2 416.3 394.4 417.4 395.2 417.4 403.3 416.4 404.2 415.4 404.0 416.1 404.9 416.5 406.3 416.9 406.8 416.8 408.0 415.4 407.7 413.2 408.9 412.5 409.0 411.3 410.2 410.1 411.3 409.8 411.9 408.7 410.8 406.7 412.1 406.3 411.5 405.6 412.2 404.5 411.9 404.2 413.0 403.3 414.5 403.4 415.1 404.2 415.4 404.2 417.4 403.4 417.6 403.1 418.7 403.4 419.2 402.1 420.0 401.7 421.5 400.6 421.8 400.3 423.2 399.2 424.3 398.9 423.4 398.6 421.5 398.1 418.5 398.5 416.6 399.2 415.7 399.2 415.1 400.5 414.7 401.9 412.9 403.2 411.3 404.6 410.0 405.3 407.5 404.3 407.7 403.9 409.2 401.8 411.0 401.2 408.9 399.2 409.5 397.2 412.1 397.8 413.2 396.1 413.5 394.9 413.6 394.9 412.6 393.7 412.2 392.7 413.0 390.4 412.9 387.8 413.3 385.3 416.1 382.2 419.5 383.5 419.6 383.9 420.5 384.7 420.7 385.1 420.0 386.0 420.2 387.1 421.6 387.2 422.8 386.5 424.0 386.5 425.5 386.1 427.4 385.0 429.1 384.7 429.9 383.6 431.2 382.5 432.4 381.0 433.7 380.5 433.7 380.0 433.2 378.9 433.9 378.9 434.4 378.7 434.2 378.7 433.6 379.1 433.6 379.3 432.3 379.0 431.4 379.7 431.0 380.7 431.2 381.2 430.1 381.4 428.8 381.8 428.4 382.2 427.3 380.9 427.7 379.0 428.2 378.7 427.1 377.8 426.3 376.4 425.8 376.1 424.7 375.8 423.8 375.6 423.3 375.0 422.0 374.4 421.5 373.2 421.1 372.1 421.2 371.2 421.4 370.6 422.0 370.9 422.4 370.9 423.1 370.6 423.5 369.9 424.8 369.9 425.4 368.8 426.1 367.8 425.7 366.9 425.8 366.5 425.4 366.0 425.3 364.8 426.1 363.8 426.3 363.1 426.6 362.1 426.4 361.4 426.4 360.9 425.8 360.1 425.2 359.4 425.0 358.3 425.2 357.6 425.4 356.5 424.9 356.4 423.9 355.4 423.7 354.7 423.5 353.9 423.0 353.0 424.3 353.3 425.0 352.6 425.9 351.4 425.6 350.7 425.5 350.1 424.9 349.3 424.9 348.6 424.5 347.4 425.2 346.0 426.1 345.2 426.4 344.9 426.5 344.4 425.8 343.4 425.9 343.1 425.4 342.5 425.2 342.1 424.4 341.7 424.2 340.5 424.5 339.5 423.8 339.1 424.4 337.3 421.2 336.3 420.2 336.6 419.8 334.7 421.1 333.9 421.1 334.0 420.4 332.9 419.9 332.2 420.3 331.9 418.8 330.5 418.5 329.8 419.1 327.9 419.6 327.5 419.9 324.5 420.4 324.2 420.8 324.7 421.8 323.9 422.1 324.1 422.5 323.4 423.1 324.6 423.9 324.4 424.5 323.3 424.5 323.1 424.9 322.1 424.2 320.9 424.3 320.0 424.8 319.1 424.3 317.4 423.4 316.2 423.4 314.5 424.8 314.5 425.7 313.6 424.9 313.0 426.3 313.2 426.5 312.8 427.4 313.4 428.3 314.1 428.3 314.5 429.0 314.5 429.5 314.8 429.8 314.5 430.4 313.8 430.7 313.0 431.8 313.7 432.8 313.6 433.5 314.5 434.8 314.0 435.2 313.8 435.4 313.5 435.4 313.0 434.8 312.7 434.7 312.3 434.5 312.0 434.0 311.2 433.8 310.8 433.9 310.7 433.8 309.6 433.3 308.4 433.1 307.8 432.9 307.7 433.1 306.7 432.1 305.8 431.7 305.1 431.1 305.7 430.9 306.3 430.0 305.9 429.5 307.0 429.1 307.0 428.7 306.3 429.0 306.4 428.5 307.5 428.0 307.6 427.7 307.5 427.0 307.8 426.4 307.8 426.0 306.6 425.7 306.2 425.7 305.7 425.0 305.1 425.3 304.1 424.8 304.1 424.5 303.8 424.0 303.2 423.9 303.1 423.5 303.3 423.3 302.9 422.7 302.0 422.8 301.8 422.7 301.6 422.9 301.3 422.9 301.1 422.1 300.9 421.6 301.1 421.5 301.7 421.6 302.0 421.2 301.8 421.0 301.2 420.7 301.3 420.5 301.0 420.2 300.5 419.4 300.7 418.9 300.6 418.3 299.8 418.0 299.4 418.1 299.3 417.8 298.5 417.4 298.2 416.6 298.2 416.0 297.8 415.6 298.1 415.1 297.8 413.8 298.4 412.9 298.3 412.6 299.2 411.8 298.4 411.0 300.0 408.9 300.7 407.9 301.1 407.0 299.9 405.8 300.2 404.7 299.5 403.5 300.0 401.8 299.2 399.6 299.9 398.0 298.6 396.5 298.8 395.0 299.4 394.8 300.7 393.9ZM135.3 395.2 137.2 397.0 139.3 399.0 139.3 400.2 139.8 400.8 139.6 399.2 141.7 399.6 143.3 401.4 142.5 402.3 141.2 402.5 141.1 404.2 140.8 404.6 140.1 404.6 139.5 404.0 138.5 403.5 138.3 402.5 137.5 402.3 136.6 402.5 136.2 402.0 135.4 401.6 135.8 402.5 135.3 403.3ZM316.7 388.2 317.5 387.7 318.3 390.2 319.9 391.4 321.5 391.4 321.0 389.7 319.9 389.4 319.8 387.2 319.9 384.8 321.4 383.1 322.2 382.0 323.4 379.3 324.2 377.1 327.0 377.7 329.8 376.1 330.4 375.1 329.8 373.7 326.9 375.4 324.6 375.8 322.2 379.0 320.3 379.3 319.8 381.4 319.3 383.4 318.3 383.7 317.4 386.1ZM351.5 355.3 353.1 358.3 354.9 362.4 354.7 366.2 353.0 366.7 350.8 365.8 349.5 364.2 348.9 361.1 347.8 360.2 349.9 356.8ZM354.7 365.0 356.3 364.6 359.0 367.1 358.7 368.6 354.3 370.1 355.5 366.7ZM385.1 376.4 387.2 376.4 390.1 378.0 389.4 380.5 386.5 380.5 385.3 381.1 383.7 379.0 384.1 377.1ZM390.8 379.3 391.1 378.3 392.5 379.0 394.5 379.6 393.6 380.8 392.3 380.5ZM386.0 384.5 386.7 383.4 387.7 383.1 388.8 384.2 388.9 385.0 387.7 385.0 386.1 384.8ZM417.4 389.4 416.4 390.4 417.4 391.1ZM135.3 389.4 137.2 389.9 137.2 390.4 135.3 391.1ZM388.3 420.8 388.7 422.1 388.6 423.3 388.9 424.7 389.8 426.8 388.6 426.4 388.1 428.0 388.8 429.3 388.8 430.1 388.2 429.4 387.7 430.2 387.6 429.3 387.6 428.2 387.6 426.9 387.7 426.0 387.8 424.3 387.3 423.2 387.4 421.4 388.1 420.7 387.8 420.2 388.2 419.9ZM291.8 419.9 294.2 420.0 294.2 419.2 293.9 419.1 293.1 418.8 292.0 419.2ZM312.8 360.6 313.7 357.8 316.7 358.3 315.6 360.6 314.6 360.6ZM321.0 358.7 322.6 356.8 325.0 357.8 323.4 359.7Z" fill="#002fb4"/>
</g>
<!--MAPUI-->
</svg>
  <div class="lctl" style="left:8px;top:57px;width:23.2px;height:44.5px">
    <div style="position:absolute;left:0;top:22px;width:100%;height:1px;background:#ddd"></div>
    <svg style="position:absolute;left:0;top:0" width="23.2" height="44.5" viewBox="0 0 23.2 44.5" stroke="#222" stroke-width="1.7" fill="none"><path d="M7.2 12.4 H16.2 M11.7 7.9 V16.9 M7.2 34.9 H16.4"/></svg>
  </div>
  <div class="lctl" style="left:8px;top:110px;width:23.2px;height:22px">
    <svg style="position:absolute;left:0;top:0" width="23.2" height="22" viewBox="0 0 23.2 22" stroke="#333" stroke-width="1.7" fill="none"><path d="M5.6 9 V5.6 H9.8 M13.6 5.6 H17.8 V9 M17.8 13.4 V16.8 H13.6 M9.8 16.8 H5.6 V13.4"/></svg>
  </div>
  <div class="lctl" style="left:8px;top:197px;width:74px;height:82.5px">
    <i style="top:7.2px;background:#002fb4"></i><span style="top:6.2px">41,746.00</span>
    <i style="top:21.7px;background:#1e4ac7"></i><span style="top:20.7px">31,321.00</span>
    <i style="top:36.2px;background:#3d66da"></i><span style="top:35.2px">20,896.00</span>
    <i style="top:50.7px;background:#5b81ec"></i><span style="top:49.7px">10,471.00</span>
    <i style="top:65.2px;background:#799cff"></i><span style="top:64.2px">46.00</span>
  </div>

  <div class="ttl"><b>Customer Summary</b> <i>&ndash;</i> <span>Sales - Customer Summary</span></div>
  <div class="foot" style="top:303.7px">22 days ago<svg width="8" height="9" viewBox="0 0 8 9"><path d="M1.35 5.68 A2.9 2.9 0 0 1 4.10 1.60 M6.65 3.32 A2.9 2.9 0 0 1 3.90 7.40" fill="none" stroke="#555" stroke-width="1.05"/><path d="M4.00 0.20 L5.80 1.60 L4.00 3.00 Z M4.00 6.00 L2.20 7.40 L4.00 8.80 Z" fill="#555" stroke="none"/></svg></div>
</div>
<div class="card" style="left:489px;top:264px;width:399px;height:328px">
  <svg style="position:absolute;left:0;top:0" width="399" height="328" viewBox="489 264 399 328">
<path d="M538.6 330.5 V506" stroke="#efefef" stroke-width="1"/>
<path d="M640.2 330.5 V506" stroke="#efefef" stroke-width="1"/>
<path d="M743.5 330.5 V506" stroke="#efefef" stroke-width="1"/>
<path d="M845.1 330.5 V506" stroke="#efefef" stroke-width="1"/>
<path d="M524 459.5 H879.5" stroke="#efefef" stroke-width="1"/>
<path d="M524 412.8 H879.5" stroke="#efefef" stroke-width="1"/>
<path d="M524 366.1 H879.5" stroke="#efefef" stroke-width="1"/>
<path d="M540.7 505.6 L544.5 503.3 L546.1 504.4 L548.8 501.7 L550.4 501.2 L552.5 492.6 L554.1 496.9 L556.3 494.2 L558.1 492.6 L559.5 491.5 L560.6 493.7 L561.7 491.5 L562.7 499.6 L563.8 492.6 L566.0 501.2 L567.6 498.0 L569.9 500.6 L571.6 488.8 L573.5 496.9 L575.6 491.0 L577.2 498.0 L578.5 488.8 L580.4 491.0 L582.1 498.0 L583.7 485.6 L585.8 498.5 L587.4 487.8 L589.0 495.8 L590.1 487.2 L591.7 481.3 L593.3 493.7 L595.5 495.8 L597.6 499.0 L598.7 484.5 L600.3 495.8 L601.9 489.9 L603.5 491.5 L605.1 496.3 L606.4 487.8 L608.4 493.7 L610.3 483.5 L612.6 495.3 L614.8 483.5 L616.4 493.7 L617.8 479.7 L619.6 484.0 L621.2 494.7 L622.8 484.5 L624.5 491.5 L625.8 481.3 L627.7 488.3 L628.7 495.8 L630.4 484.5 L632.0 491.5 L633.4 482.4 L635.0 498.5 L636.8 487.8 L639.5 492.1 L640.0 491.8 L642.8 482.2 L644.8 495.3 L646.2 483.5 L647.6 493.2 L649.7 476.6 L651.7 493.2 L653.8 486.3 L655.2 491.1 L657.7 483.5 L660.0 491.8 L661.0 482.2 L664.2 491.1 L666.0 480.5 L667.6 491.8 L669.0 482.8 L671.8 493.9 L673.4 472.5 L676.2 485.6 L677.3 479.4 L679.4 491.8 L681.4 475.9 L683.5 484.9 L684.9 476.6 L687.7 493.9 L690.8 475.0 L692.2 491.1 L693.9 479.4 L695.2 488.4 L696.6 473.9 L699.1 489.8 L700.5 472.8 L702.8 488.4 L704.9 482.2 L707.7 486.3 L709.8 482.2 L711.1 484.9 L712.1 475.2 L713.9 482.8 L716.7 476.6 L718.7 473.9 L719.4 483.5 L720.1 460.1 L721.5 475.2 L722.5 338.8 L723.6 453.1 L724.9 461.4 L726.3 472.5 L727.8 453.8 L729.1 473.2 L730.5 482.8 L732.3 469.0 L734.6 480.8 L736.3 475.2 L738.8 498.7 L740.6 484.9 L742.2 488.4 L743.3 497.3 L744.3 475.9 L745.7 468.3 L747.0 475.2 L748.1 464.2 L749.4 463.5 L750.0 471.1 L751.7 459.4 L753.9 480.1 L755.2 466.3 L757.6 482.2 L759.4 471.8 L761.7 480.1 L763.1 467.0 L765.9 481.5 L768.0 466.3 L770.0 478.7 L771.8 467.0 L773.8 478.7 L775.6 458.0 L777.6 475.2 L779.3 464.2 L781.8 475.2 L784.3 458.7 L785.6 482.8 L786.7 458.0 L789.4 480.1 L791.0 467.0 L792.8 478.0 L794.6 462.1 L797.7 479.4 L798.6 455.2 L801.4 484.2 L803.9 460.1 L805.2 484.2 L806.9 460.7 L809.7 484.2 L812.2 460.1 L813.3 475.2 L814.0 449.0 L816.3 453.1 L817.3 472.5 L818.1 449.7 L819.1 446.2 L820.2 471.1 L823.2 484.9 L825.3 491.8 L826.7 478.7 L828.5 472.5 L830.1 475.2 L831.8 467.7 L832.9 476.6 L834.0 453.1 L837.0 486.3 L838.4 469.0 L840.5 485.6 L841.9 467.7 L844.6 487.7 L846.7 468.3 L848.3 495.3 L851.5 474.6 L852.9 472.5 L854.6 458.7 L856.4 481.5 L858.0 461.4 L860.2 477.3 L861.9 455.9 L861.9 506.2 L540.7 506.2 Z" fill="#356aff" fill-opacity=".5" stroke="none"/>
<path d="M540.7 505.6 L544.5 503.3 L546.1 504.4 L548.8 501.7 L550.4 501.2 L552.5 492.6 L554.1 496.9 L556.3 494.2 L558.1 492.6 L559.5 491.5 L560.6 493.7 L561.7 491.5 L562.7 499.6 L563.8 492.6 L566.0 501.2 L567.6 498.0 L569.9 500.6 L571.6 488.8 L573.5 496.9 L575.6 491.0 L577.2 498.0 L578.5 488.8 L580.4 491.0 L582.1 498.0 L583.7 485.6 L585.8 498.5 L587.4 487.8 L589.0 495.8 L590.1 487.2 L591.7 481.3 L593.3 493.7 L595.5 495.8 L597.6 499.0 L598.7 484.5 L600.3 495.8 L601.9 489.9 L603.5 491.5 L605.1 496.3 L606.4 487.8 L608.4 493.7 L610.3 483.5 L612.6 495.3 L614.8 483.5 L616.4 493.7 L617.8 479.7 L619.6 484.0 L621.2 494.7 L622.8 484.5 L624.5 491.5 L625.8 481.3 L627.7 488.3 L628.7 495.8 L630.4 484.5 L632.0 491.5 L633.4 482.4 L635.0 498.5 L636.8 487.8 L639.5 492.1 L640.0 491.8 L642.8 482.2 L644.8 495.3 L646.2 483.5 L647.6 493.2 L649.7 476.6 L651.7 493.2 L653.8 486.3 L655.2 491.1 L657.7 483.5 L660.0 491.8 L661.0 482.2 L664.2 491.1 L666.0 480.5 L667.6 491.8 L669.0 482.8 L671.8 493.9 L673.4 472.5 L676.2 485.6 L677.3 479.4 L679.4 491.8 L681.4 475.9 L683.5 484.9 L684.9 476.6 L687.7 493.9 L690.8 475.0 L692.2 491.1 L693.9 479.4 L695.2 488.4 L696.6 473.9 L699.1 489.8 L700.5 472.8 L702.8 488.4 L704.9 482.2 L707.7 486.3 L709.8 482.2 L711.1 484.9 L712.1 475.2 L713.9 482.8 L716.7 476.6 L718.7 473.9 L719.4 483.5 L720.1 460.1 L721.5 475.2 L722.5 338.8 L723.6 453.1 L724.9 461.4 L726.3 472.5 L727.8 453.8 L729.1 473.2 L730.5 482.8 L732.3 469.0 L734.6 480.8 L736.3 475.2 L738.8 498.7 L740.6 484.9 L742.2 488.4 L743.3 497.3 L744.3 475.9 L745.7 468.3 L747.0 475.2 L748.1 464.2 L749.4 463.5 L750.0 471.1 L751.7 459.4 L753.9 480.1 L755.2 466.3 L757.6 482.2 L759.4 471.8 L761.7 480.1 L763.1 467.0 L765.9 481.5 L768.0 466.3 L770.0 478.7 L771.8 467.0 L773.8 478.7 L775.6 458.0 L777.6 475.2 L779.3 464.2 L781.8 475.2 L784.3 458.7 L785.6 482.8 L786.7 458.0 L789.4 480.1 L791.0 467.0 L792.8 478.0 L794.6 462.1 L797.7 479.4 L798.6 455.2 L801.4 484.2 L803.9 460.1 L805.2 484.2 L806.9 460.7 L809.7 484.2 L812.2 460.1 L813.3 475.2 L814.0 449.0 L816.3 453.1 L817.3 472.5 L818.1 449.7 L819.1 446.2 L820.2 471.1 L823.2 484.9 L825.3 491.8 L826.7 478.7 L828.5 472.5 L830.1 475.2 L831.8 467.7 L832.9 476.6 L834.0 453.1 L837.0 486.3 L838.4 469.0 L840.5 485.6 L841.9 467.7 L844.6 487.7 L846.7 468.3 L848.3 495.3 L851.5 474.6 L852.9 472.5 L854.6 458.7 L856.4 481.5 L858.0 461.4 L860.2 477.3 L861.9 455.9" fill="none" stroke="#356aff" stroke-width="1.75" stroke-linejoin="round"/>
<path d="M524 506.2 H879.5" stroke="#444" stroke-width="1"/>
<g font-family="DejaVu Sans, sans-serif" font-size="10.5" fill="#444">
<text x="519" y="510.05" text-anchor="end">0</text>
<text x="519" y="463.35" text-anchor="end">50k</text>
<text x="519" y="416.65" text-anchor="end">100k</text>
<text x="519" y="369.95" text-anchor="end">150k</text>
<text x="538.6" y="521" text-anchor="middle">Jan 2017</text>
<text x="640.2" y="521" text-anchor="middle">Jul 2017</text>
<text x="743.5" y="521" text-anchor="middle">Jan 2018</text>
<text x="845.1" y="521" text-anchor="middle">Jul 2018</text>
<text x="523.2" y="542.8">amount</text>
</g>
<rect x="493.2" y="537.4" width="25.8" height="5.4" fill="#356aff" fill-opacity=".5"/><path d="M493.2 537.4 H519" stroke="#356aff" stroke-width="1.6"/>
</svg>
  <div class="ttl"><b>Amount per Day</b> <i>&ndash;</i> <span>Sales - Amount per Day</span></div>
  <div class="foot" style="top:303.7px">22 days ago<svg width="8" height="9" viewBox="0 0 8 9"><path d="M1.35 5.68 A2.9 2.9 0 0 1 4.10 1.60 M6.65 3.32 A2.9 2.9 0 0 1 3.90 7.40" fill="none" stroke="#555" stroke-width="1.05"/><path d="M4.00 0.20 L5.80 1.60 L4.00 3.00 Z M4.00 6.00 L2.20 7.40 L4.00 8.80 Z" fill="#555" stroke="none"/></svg></div>
</div>
<div class="card" style="left:902px;top:264px;width:398px;height:328px">
  <svg style="position:absolute;left:0;top:0" width="398" height="328" viewBox="902 264 398 328">
<path d="M1097.40 360.20 A65 65 0 0 1 1162.03 418.27 L1123.25 422.43 A26 26 0 0 0 1097.40 399.20 Z" fill="#356aff"/>
<path d="M1162.03 418.27 A65 65 0 0 1 1134.94 478.26 L1112.42 446.42 A26 26 0 0 0 1123.25 422.43 Z" fill="#50f5ed"/>
<path d="M1134.94 478.26 A65 65 0 0 1 1064.31 481.15 L1084.16 447.58 A26 26 0 0 0 1112.42 446.42 Z" fill="#604fe9"/>
<path d="M1064.31 481.15 A65 65 0 0 1 1033.33 414.23 L1071.77 420.81 A26 26 0 0 0 1084.16 447.58 Z" fill="#3bd973"/>
<path d="M1033.33 414.23 A65 65 0 0 1 1097.40 360.20 L1097.40 399.20 A26 26 0 0 0 1071.77 420.81 Z" fill="#e92828"/>
<g font-family="DejaVu Sans, sans-serif" font-size="10.4" text-anchor="middle" style="text-shadow:1px 1px 3px #333">
<text x="1127.8" y="395.2" fill="#fff">23.3%</text>
<text x="1138.9" y="447.7" fill="#333">16.9%</text>
<text x="1099.3" y="474.5" fill="#fff">18.3%</text>
<text x="1056.1" y="448.1" fill="#333">19.2%</text>
<text x="1068.1" y="394.2" fill="#fff">22.3%</text>
</g>
<text x="1097.4" y="360" text-anchor="middle" font-family="DejaVu Sans, sans-serif" font-size="10.4" fill="#444">amount</text>
<g font-family="DejaVu Sans, sans-serif" font-size="10.25" fill="#444">
<rect x="913.7" y="501.9" width="10.1" height="10.2" fill="#356aff"/><text x="936.3" y="510.9">beleza_saude</text>
<rect x="913.7" y="518.2" width="10.1" height="10.2" fill="#3bd973"/><text x="936.3" y="527.2">cama_mesa_banho</text>
<rect x="913.7" y="534.4" width="10.1" height="10.2" fill="#50f5ed"/><text x="936.3" y="543.4">informatica_acessorios</text>
<rect x="1070.1" y="501.9" width="10.1" height="10.2" fill="#e92828"/><text x="1092.7" y="510.9">relogios_presentes</text>
<rect x="1070.1" y="518.2" width="10.1" height="10.2" fill="#604fe9"/><text x="1092.7" y="527.2">esporte_lazer</text>
</g></svg>
  <div class="ttl"><b style="letter-spacing:.17px">Product Category Distribution</b> <i>&ndash;</i> <span style="letter-spacing:.1px">Sales - Product Category<br>Distribution</span></div>
  <div class="foot" style="top:303.7px">22 days ago<svg width="8" height="9" viewBox="0 0 8 9"><path d="M1.35 5.68 A2.9 2.9 0 0 1 4.10 1.60 M6.65 3.32 A2.9 2.9 0 0 1 3.90 7.40" fill="none" stroke="#555" stroke-width="1.05"/><path d="M4.00 0.20 L5.80 1.60 L4.00 3.00 Z M4.00 6.00 L2.20 7.40 L4.00 8.80 Z" fill="#555" stroke="none"/></svg></div>
</div>

<!-- row 3 -->
<div class="card" style="left:77px;top:606px;width:399px;height:60px">
  <div class="ttl"><b style="letter-spacing:-.09px">Sales by Day of Week</b> <i>&ndash;</i> <span style="letter-spacing:-.05px">Sales - Day of Week</span></div>
</div>

</div>
<div id="frame"></div>
</body>
</html>
